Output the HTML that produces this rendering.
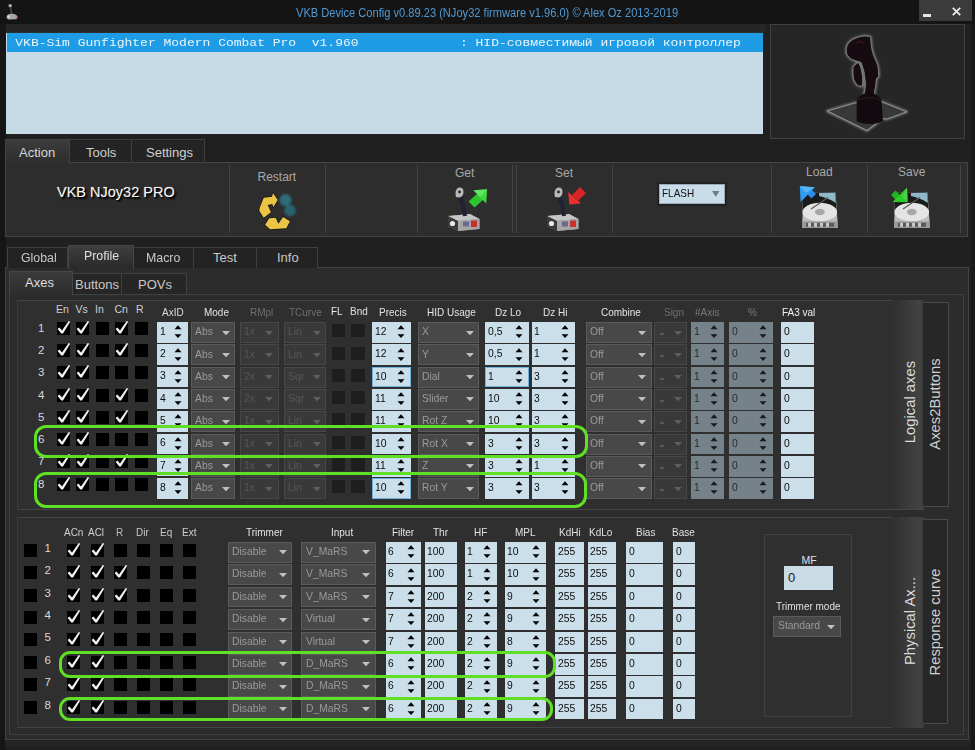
<!DOCTYPE html><html><head><meta charset="utf-8"><style>
html,body{margin:0;padding:0}
body{width:975px;height:750px;overflow:hidden;position:relative;background:#1d1d1d;font-family:"Liberation Sans",sans-serif}
div,svg{position:absolute}
.t{white-space:pre}
</style></head><body>
<div style="left:0px;top:0px;width:975px;height:24px;background:#141414"></div>
<div style="left:0px;top:24px;width:975px;height:726px;background:#202020"></div>
<div style="left:6px;top:24px;width:760px;height:8px;background:#262626"></div>
<div style="left:0px;top:24px;width:6px;height:726px;background:#161616"></div>
<div style="left:971px;top:24px;width:4px;height:726px;background:#181818"></div>
<div class="t" style="left:296px;top:6.64px;font-size:12px;line-height:12px;color:#4f98d2;font-family:'Liberation Sans',sans-serif;transform:scaleX(0.925);transform-origin:0 0">VKB Device Config v0.89.23 (NJoy32 firmware v1.96.0) © Alex Oz 2013-2019</div>
<div style="left:918.6px;top:0px;width:53.5px;height:20.8px;background:#3b3b3b"></div>
<div style="left:923.3px;top:14.3px;width:8px;height:2.3px;background:#e4e4e4"></div>
<svg style="position:absolute;left:952px;top:6.5px" width="9" height="9" viewBox="0 0 9 9"><path d="M0.8 0.8 L8.2 8.2 M8.2 0.8 L0.8 8.2" stroke="#e8e8e8" stroke-width="1.9"/></svg>
<svg style="position:absolute;left:0;top:0" width="30" height="25" viewBox="0 0 30 25"><defs><filter id="ib"><feGaussianBlur stdDeviation="0.7"/></filter></defs><g filter="url(#ib)"><circle cx="10.2" cy="5.8" r="1.7" fill="#b0b0b0"/><path d="M10.5 7.5 L11.5 13.5" stroke="#4a4a4a" stroke-width="1.6"/><path d="M6.5 17.5 C6.5 14.5 9 13.5 12 13.8 C15 14 17.5 15 17.5 17 L16.5 19.2 L8 19.5 Z" fill="#a8a8a8"/><circle cx="8.5" cy="16.8" r="1.2" fill="#e0e0e0"/><circle cx="16.5" cy="17" r="1" fill="#c08090"/></g></svg>
<div style="left:6px;top:32px;width:757px;height:101.3px;background:#c6dbe6;border-top:1px solid #2e2e2e"></div>
<div style="left:7px;top:33px;width:756px;height:18.5px;background:#1e9ce6"></div>
<div class="t" style="left:15.3px;top:35.74px;font-size:13px;line-height:13px;color:rgba(255,255,255,0.9);font-family:'Liberation Mono',monospace;transform:scaleY(0.88);transform-origin:0 10px">VKB-Sim Gunfighter Modern Combat Pro  v1.960             : HID-совместимый игровой контроллер</div>
<div style="left:770px;top:24px;width:195px;height:115px;background:#262626;border:1px solid #404040;box-sizing:border-box"></div>
<svg style="position:absolute;left:770px;top:24px" width="195" height="116" viewBox="770 24 195 116">
<defs><filter id="gl" x="-30%" y="-30%" width="160%" height="160%"><feGaussianBlur stdDeviation="1.1"/></filter></defs>
<g filter="url(#gl)" opacity="0.8" fill="none" stroke="#8a8a8a" stroke-width="2.6" stroke-linejoin="round">
<path d="M827.3 111 L855 103 L882 102 L906.7 111.7 L887 119 L883 118.5 L867 130.5 Z"/>
<path d="M864 36 C867 36 870 36.5 870.6 37 C871 40 871 43 871.3 45.6 C872 50 873 54 874.3 57.3 C876 61 877.5 64 877.9 66.1 C878.5 70 878.8 73 878.7 76.4 L876.5 78.6 C876 81 875.8 84 875.7 86.7 C875 89 874.6 91 874.3 95 L864 95 C865 90 865.5 86 865.5 83.7 C865 79 864.5 75 864 72 C863 68 862 65 861 62.5 L858.9 61.7 C856 61 853 60 850.8 58.8 C848.5 57 847 55 846.4 53 C846 50 846.5 47.5 847.1 45.6 C848.5 42.5 851 40.5 853.7 39 C857 37.5 860.5 36.2 864 36 Z"/>
<path d="M858.5 62.5 C856 63.8 854 65.5 853 67.6 C852.8 71.5 853 75.5 853.7 79.3 C854.5 81.5 856 83.5 857.4 85.2 C859 86 860.8 86.2 862.5 86 C862.8 83 862.7 79.5 862.5 76.4 C862 72.5 861.3 69 860.3 66.1 Z"/>
</g>
<path d="M827.3 111 L855 103 L882 102 L906.7 111.7 L887 119 L883 118.5 L867 130.5 Z" fill="#383838" stroke="#8c8c8c" stroke-width="1.1" stroke-linejoin="round"/>
<path d="M858.5 62.5 C856 63.8 854 65.5 853 67.6 C852.8 71.5 853 75.5 853.7 79.3 C854.5 81.5 856 83.5 857.4 85.2 C859 86 860.8 86.2 862.5 86 C862.8 83 862.7 79.5 862.5 76.4 C862 72.5 861.3 69 860.3 66.1 Z" fill="#160c10" stroke="#808080" stroke-width="0.9"/>
<path d="M864 36 C867 36 870 36.5 870.6 37 C871 40 871 43 871.3 45.6 C872 50 873 54 874.3 57.3 C876 61 877.5 64 877.9 66.1 C878.5 70 878.8 73 878.7 76.4 L876.5 78.6 C876 81 875.8 84 875.7 86.7 C875 89 874.6 91 874.3 95 L864 95 C865 90 865.5 86 865.5 83.7 C865 79 864.5 75 864 72 C863 68 862 65 861 62.5 L858.9 61.7 C856 61 853 60 850.8 58.8 C848.5 57 847 55 846.4 53 C846 50 846.5 47.5 847.1 45.6 C848.5 42.5 851 40.5 853.7 39 C857 37.5 860.5 36.2 864 36 Z" fill="#150b10" stroke="#858585" stroke-width="0.9"/>
<path d="M857 43 C859 41 862 41 864 43" stroke="#4a1a28" stroke-width="1.2" fill="none"/>
<path d="M856.7 102 C857 96 864 93 869 93 C874 93 881 96 881.6 102 L883 121 C878 125 862 125 856.7 121 Z" fill="#120a0e"/>
<path d="M858 100 C862 97 876 97 880 100" stroke="#2a2a2a" stroke-width="0.8" fill="none"/>
</svg>
<div style="left:5px;top:162px;width:963px;height:75px;background:#2d2d2d;border:1px solid #444;box-sizing:border-box"></div>
<div style="left:5px;top:139px;width:65px;height:24.5px;background:linear-gradient(#3c3c3c,#2d2d2d);border:1px solid #424242;border-bottom:none;box-sizing:border-box"></div>
<div style="left:70px;top:139px;width:62px;height:23px;background:#242424;border:1px solid #3f3f3f;border-bottom:none;border-left:none;box-sizing:border-box"></div>
<div style="left:132px;top:139px;width:73px;height:23px;background:#242424;border:1px solid #3f3f3f;border-bottom:none;border-left:none;box-sizing:border-box"></div>
<div class="t" style="left:19px;top:146.00px;font-size:13px;line-height:13px;color:#d6d6d6;font-family:'Liberation Sans',sans-serif;">Action</div>
<div class="t" style="left:86px;top:146.00px;font-size:13px;line-height:13px;color:#cfcfcf;font-family:'Liberation Sans',sans-serif;">Tools</div>
<div class="t" style="left:146px;top:146.00px;font-size:13px;line-height:13px;color:#cfcfcf;font-family:'Liberation Sans',sans-serif;">Settings</div>
<div style="left:228.5px;top:165px;width:1px;height:68px;background:#454545"></div>
<div style="left:325px;top:165px;width:1px;height:68px;background:#454545"></div>
<div style="left:416.5px;top:165px;width:1px;height:68px;background:#454545"></div>
<div style="left:512.3px;top:165px;width:1px;height:68px;background:#454545"></div>
<div style="left:515.5px;top:165px;width:1px;height:68px;background:#454545"></div>
<div style="left:611.5px;top:165px;width:1px;height:68px;background:#454545"></div>
<div style="left:771px;top:165px;width:1px;height:68px;background:#454545"></div>
<div style="left:867px;top:165px;width:1px;height:68px;background:#454545"></div>
<div style="left:960px;top:165px;width:1px;height:68px;background:#454545"></div>
<div class="t" style="left:57px;top:185.33px;font-size:14.5px;line-height:14.5px;color:#f4f4f4;font-family:'Liberation Sans',sans-serif;text-shadow:1px 1px 0 #000,2px 2px 2px #000,0 0 1px #ccc">VKB NJoy32 PRO</div>
<div class="t" style="left:257.5px;top:171.24px;font-size:12px;line-height:12px;color:#a8a8a8;font-family:'Liberation Sans',sans-serif;">Restart</div>
<div class="t" style="left:455px;top:167.34px;font-size:12px;line-height:12px;color:#a8a8a8;font-family:'Liberation Sans',sans-serif;">Get</div>
<div class="t" style="left:555px;top:167.34px;font-size:12px;line-height:12px;color:#a8a8a8;font-family:'Liberation Sans',sans-serif;">Set</div>
<div class="t" style="left:806px;top:166.34px;font-size:12px;line-height:12px;color:#a8a8a8;font-family:'Liberation Sans',sans-serif;">Load</div>
<div class="t" style="left:898px;top:166.34px;font-size:12px;line-height:12px;color:#a8a8a8;font-family:'Liberation Sans',sans-serif;">Save</div>
<div style="left:659.4px;top:184.1px;width:65.4px;height:20.1px;background:#c8dde8;border:1px solid #9ab;box-sizing:border-box;box-shadow:0 0 0 2px #222"></div>
<div class="t" style="left:661.5px;top:188.41px;font-size:10.5px;line-height:10.5px;color:#111;font-family:'Liberation Sans',sans-serif;transform:scaleX(0.95);transform-origin:0 0">FLASH</div>
<svg style="position:absolute;left:711.5px;top:191px" width="8" height="6" viewBox="0 0 8 6"><path d="M0 0 L7.5 0 L3.75 5.8 Z" fill="#6d7d87"/></svg>
<svg style="position:absolute;left:255px;top:188px" width="45" height="45" viewBox="255 188 45 45">
<defs><filter id="bl" x="-50%" y="-50%" width="200%" height="200%"><feGaussianBlur stdDeviation="1.3"/></filter></defs>
<g filter="url(#bl)"><circle cx="285.5" cy="200" r="6" fill="#2e6c78"/><circle cx="290" cy="210.5" r="5.8" fill="#2a6470"/></g>
<path d="M259.7 207.7 L263.7 197.7 L272 196.7 L273 193 L277.7 200 L273.3 207.3 L272.3 204 L267.7 205 L271 212.3 L263.7 217.7 L259.3 211 Z" fill="#ebc445" stroke="#141414" stroke-width="1.4" stroke-linejoin="round" paint-order="stroke"/>
<path d="M265 224.7 L269.3 218.3 L275.7 217.7 L278.3 223.7 L283 217 L290 221.3 L286.3 228.3 L270 229.3 Z" fill="#ebc445" stroke="#141414" stroke-width="1.4" stroke-linejoin="round" paint-order="stroke"/>
</svg>
<svg style="position:absolute;left:440px;top:180px" width="55" height="55" viewBox="440 180 55 55">
<path d="M448 216 L470 214 L479.5 219 L479.5 229 L458 231 L448 226 Z" fill="#8a8a8a"/>
<path d="M448 216 L470 214 L479.5 219 L458 221 Z" fill="#c4c4c4"/>
<path d="M458 221 L479.5 219 L479.5 229 L458 231 Z" fill="#a6a6a6"/>
<path d="M448 216 L458 221 L458 231 L448 226 Z" fill="#3a3a3a"/>
<circle cx="452.5" cy="223.5" r="2.6" fill="#e8e8e8"/>
<rect x="471" y="220.5" width="6" height="6.5" fill="#c8302e"/>
<rect x="463" y="221.5" width="6" height="5" fill="#6a6a8a"/>
<path d="M460.5 196 C462 202 464 209 465 216" stroke="#1e2232" stroke-width="4" fill="none"/>
<path d="M456 197 C455 193 455.5 189 458.5 187.8 C461.5 187 463.8 189 463.5 192.5 C463.2 195 462 197 460 197.5 Z" fill="#b8b8b8"/>
<circle cx="459.5" cy="192" r="1.4" fill="#2a2a2a"/>
<path d="M477.5 193.5 L483.5 199.5 L474.5 207.5 L468.5 201.5 Z" fill="#2fc42f"/><path d="M473.4 190.3 L487.2 189.3 L486.2 203.5 Z" fill="#3cd83c"/><path d="M473.4 190.3 L487.2 189.3 L480 197 Z" fill="#8af08a" opacity="0.5"/>
</svg>
<svg style="position:absolute;left:539px;top:179.5px" width="55" height="55" viewBox="440 180 55 55">
<path d="M448 216 L470 214 L479.5 219 L479.5 229 L458 231 L448 226 Z" fill="#8a8a8a"/>
<path d="M448 216 L470 214 L479.5 219 L458 221 Z" fill="#c4c4c4"/>
<path d="M458 221 L479.5 219 L479.5 229 L458 231 Z" fill="#a6a6a6"/>
<path d="M448 216 L458 221 L458 231 L448 226 Z" fill="#3a3a3a"/>
<circle cx="452.5" cy="223.5" r="2.6" fill="#e8e8e8"/>
<rect x="471" y="220.5" width="6" height="6.5" fill="#c8302e"/>
<rect x="463" y="221.5" width="6" height="5" fill="#6a6a8a"/>
<path d="M460.5 196 C462 202 464 209 465 216" stroke="#1e2232" stroke-width="4" fill="none"/>
<path d="M456 197 C455 193 455.5 189 458.5 187.8 C461.5 187 463.8 189 463.5 192.5 C463.2 195 462 197 460 197.5 Z" fill="#b8b8b8"/>
<circle cx="459.5" cy="192" r="1.4" fill="#2a2a2a"/>
<path d="M473 195 L479 201 L487 193 L481 187 Z" fill="#d82424"/><path d="M470.3 204.6 L469.2 192.1 L482 203.5 Z" fill="#e83030"/>
</svg>
<svg style="position:absolute;left:790px;top:180px" width="55" height="55" viewBox="790 180 55 55">
<path d="M803.2 192.5 L835.5 192.1 L837.5 221 L837.7 228 L802.1 228 L802.3 221 Z" fill="#bdbdbd"/>
<path d="M803.2 192.5 L835.5 192.1 L836.5 212 L802.8 212 Z" fill="#1a1a1a"/>
<path d="M819 193 L835.3 192.6 L835.8 203 C830 199 824 197 819 196 Z" fill="#8fb8c8"/>
<ellipse cx="819.8" cy="212" rx="17.3" ry="9.3" fill="#e4e4e4"/>
<ellipse cx="819.8" cy="212" rx="5" ry="3.2" fill="#a8a8a8"/>
<path d="M811 209 L828 197.5" stroke="#5a5a5a" stroke-width="1.3"/>
<rect x="802.1" y="221.5" width="35.6" height="6.5" fill="#9a9a9a"/>
<rect x="806" y="222.8" width="28" height="4" fill="#5a5a5a"/>
<rect x="808" y="222.8" width="3" height="4" fill="#c8c8c8"/><rect x="814" y="222.8" width="3" height="4" fill="#c8c8c8"/><rect x="820" y="222.8" width="3" height="4" fill="#c8c8c8"/><rect x="826" y="222.8" width="3" height="4" fill="#c8c8c8"/>
<path d="M804.5 191.5 L809 187 L816 194 L811.5 198.5 Z" fill="#2a8ee6"/><path d="M799.8 186 L815 187.2 L800.6 202 Z" fill="#2f9cf0"/><path d="M799.8 186 L815 187.2 L806 193 Z" fill="#80c8ff" opacity="0.5"/>
</svg>
<svg style="position:absolute;left:882px;top:180px" width="55" height="55" viewBox="790 180 55 55">
<path d="M803.2 192.5 L835.5 192.1 L837.5 221 L837.7 228 L802.1 228 L802.3 221 Z" fill="#bdbdbd"/>
<path d="M803.2 192.5 L835.5 192.1 L836.5 212 L802.8 212 Z" fill="#1a1a1a"/>
<path d="M819 193 L835.3 192.6 L835.8 203 C830 199 824 197 819 196 Z" fill="#8fb8c8"/>
<ellipse cx="819.8" cy="212" rx="17.3" ry="9.3" fill="#e4e4e4"/>
<ellipse cx="819.8" cy="212" rx="5" ry="3.2" fill="#a8a8a8"/>
<path d="M811 209 L828 197.5" stroke="#5a5a5a" stroke-width="1.3"/>
<rect x="802.1" y="221.5" width="35.6" height="6.5" fill="#9a9a9a"/>
<rect x="806" y="222.8" width="28" height="4" fill="#5a5a5a"/>
<rect x="808" y="222.8" width="3" height="4" fill="#c8c8c8"/><rect x="814" y="222.8" width="3" height="4" fill="#c8c8c8"/><rect x="820" y="222.8" width="3" height="4" fill="#c8c8c8"/><rect x="826" y="222.8" width="3" height="4" fill="#c8c8c8"/>
<path d="M811 198 L806.5 202.5 L799 195 L803.5 190.5 Z" fill="#22b422"/><path d="M815.7 202.2 L815 187.5 L800.5 202 Z" fill="#2ccc2c"/><path d="M815 187.5 L810 196 L815.7 202.2 Z" fill="#60e060" opacity="0.5"/>
</svg>
<div style="left:5px;top:267px;width:964px;height:473px;background:#2c2c2c;border:1px solid #424242;box-sizing:border-box"></div>
<div style="left:7px;top:247px;width:61px;height:21px;background:#232323;border:1px solid #404040;border-bottom:none;box-sizing:border-box"></div>
<div class="t" style="left:20.5px;top:251.00px;font-size:13px;line-height:13px;color:#c8c8c8;font-family:'Liberation Sans',sans-serif;transform:scaleX(0.95);transform-origin:0 0">Global</div>
<div style="left:68px;top:245px;width:65.5px;height:24px;background:linear-gradient(#3e3e3e,#2a2a2a);border:1px solid #464646;border-bottom:none;box-sizing:border-box"></div>
<div class="t" style="left:83.5px;top:248.70px;font-size:13px;line-height:13px;color:#e0e0e0;font-family:'Liberation Sans',sans-serif;transform:scaleX(0.95);transform-origin:0 0">Profile</div>
<div style="left:133.5px;top:247px;width:60.5px;height:21px;background:#232323;border:1px solid #404040;border-bottom:none;box-sizing:border-box;border-left:none"></div>
<div class="t" style="left:146px;top:251.00px;font-size:13px;line-height:13px;color:#c8c8c8;font-family:'Liberation Sans',sans-serif;transform:scaleX(0.95);transform-origin:0 0">Macro</div>
<div style="left:194px;top:247px;width:63px;height:21px;background:#232323;border:1px solid #404040;border-bottom:none;box-sizing:border-box;border-left:none"></div>
<div class="t" style="left:213px;top:251.00px;font-size:13px;line-height:13px;color:#c8c8c8;font-family:'Liberation Sans',sans-serif;">Test</div>
<div style="left:257px;top:247px;width:61px;height:21px;background:#232323;border:1px solid #404040;border-bottom:none;box-sizing:border-box;border-left:none"></div>
<div class="t" style="left:277px;top:251.00px;font-size:13px;line-height:13px;color:#c8c8c8;font-family:'Liberation Sans',sans-serif;">Info</div>
<div style="left:9px;top:293.5px;width:955px;height:441.5px;background:#2c2c2c;border:1px solid #404040;box-sizing:border-box"></div>
<div style="left:9px;top:271px;width:63.5px;height:24px;background:linear-gradient(#3a3a3a,#2d2d2d);border:1px solid #474747;border-bottom:none;box-sizing:border-box"></div>
<div class="t" style="left:25px;top:276.00px;font-size:13px;line-height:13px;color:#dedede;font-family:'Liberation Sans',sans-serif;">Axes</div>
<div style="left:72.5px;top:273px;width:49.5px;height:21px;background:#262626;border:1px solid #404040;border-bottom:none;border-left:none;box-sizing:border-box"></div>
<div class="t" style="left:75px;top:278.00px;font-size:13px;line-height:13px;color:#c8c8c8;font-family:'Liberation Sans',sans-serif;">Buttons</div>
<div style="left:122px;top:273px;width:65px;height:21px;background:#262626;border:1px solid #404040;border-bottom:none;border-left:none;box-sizing:border-box"></div>
<div class="t" style="left:138px;top:278.00px;font-size:13px;line-height:13px;color:#c8c8c8;font-family:'Liberation Sans',sans-serif;">POVs</div>
<div style="left:17px;top:299.5px;width:907px;height:210px;background:#2f2f2f;border-top:1px solid #454545;border-left:1px solid #3a3a3a;border-bottom:1px solid #454545;box-sizing:border-box"></div>
<div style="left:891.5px;top:299.5px;width:32px;height:209px;background:linear-gradient(90deg,#2f2f2f,#434343 88%,#3a3a3a);"></div>
<div style="left:923.3px;top:301.5px;width:25.5px;height:205px;background:#272727;border:1px solid #4a4a4a;border-left:none;box-sizing:border-box"></div>
<div class="t" style="left:910px;top:402px;width:0;height:0"><div style="position:absolute;left:-60px;top:-8px;width:120px;text-align:center;font-size:14.8px;line-height:16px;color:#dcdcdc;transform:rotate(-90deg)">Logical axes</div></div>
<div class="t" style="left:935px;top:404.2px;width:0;height:0"><div style="position:absolute;left:-60px;top:-8px;width:120px;text-align:center;font-size:14.8px;line-height:16px;color:#d0d0d0;transform:rotate(-90deg)">Axes2Buttons</div></div>
<div class="t" style="left:56px;top:303.81px;font-size:10.5px;line-height:10.5px;color:#cfcfcf;font-family:'Liberation Sans',sans-serif;">En</div>
<div class="t" style="left:75.5px;top:303.81px;font-size:10.5px;line-height:10.5px;color:#cfcfcf;font-family:'Liberation Sans',sans-serif;">Vs</div>
<div class="t" style="left:95px;top:303.81px;font-size:10.5px;line-height:10.5px;color:#cfcfcf;font-family:'Liberation Sans',sans-serif;">In</div>
<div class="t" style="left:114.5px;top:303.81px;font-size:10.5px;line-height:10.5px;color:#cfcfcf;font-family:'Liberation Sans',sans-serif;">Cn</div>
<div class="t" style="left:136px;top:303.81px;font-size:10.5px;line-height:10.5px;color:#cfcfcf;font-family:'Liberation Sans',sans-serif;">R</div>
<div class="t" style="left:162px;top:307.11px;font-size:10.5px;line-height:10.5px;color:#dcdcdc;font-family:'Liberation Sans',sans-serif;transform:scaleX(0.95);transform-origin:0 0">AxID</div>
<div class="t" style="left:203.6px;top:307.11px;font-size:10.5px;line-height:10.5px;color:#e4e4e4;font-family:'Liberation Sans',sans-serif;transform:scaleX(0.95);transform-origin:0 0">Mode</div>
<div class="t" style="left:249.8px;top:307.11px;font-size:10.5px;line-height:10.5px;color:#6e6e6e;font-family:'Liberation Sans',sans-serif;transform:scaleX(0.95);transform-origin:0 0">RMpl</div>
<div class="t" style="left:288.7px;top:307.11px;font-size:10.5px;line-height:10.5px;color:#6e6e6e;font-family:'Liberation Sans',sans-serif;transform:scaleX(0.95);transform-origin:0 0">TCurve</div>
<div class="t" style="left:330.7px;top:305.61px;font-size:10.5px;line-height:10.5px;color:#e8e8e8;font-family:'Liberation Sans',sans-serif;transform:scaleX(0.95);transform-origin:0 0">FL</div>
<div class="t" style="left:350.4px;top:305.61px;font-size:10.5px;line-height:10.5px;color:#e0e0e0;font-family:'Liberation Sans',sans-serif;transform:scaleX(0.95);transform-origin:0 0">Bnd</div>
<div class="t" style="left:378.5px;top:307.11px;font-size:10.5px;line-height:10.5px;color:#e4e4e4;font-family:'Liberation Sans',sans-serif;transform:scaleX(0.95);transform-origin:0 0">Precis</div>
<div class="t" style="left:427px;top:307.11px;font-size:10.5px;line-height:10.5px;color:#e4e4e4;font-family:'Liberation Sans',sans-serif;transform:scaleX(0.95);transform-origin:0 0">HID Usage</div>
<div class="t" style="left:494.8px;top:307.11px;font-size:10.5px;line-height:10.5px;color:#e4e4e4;font-family:'Liberation Sans',sans-serif;transform:scaleX(0.95);transform-origin:0 0">Dz Lo</div>
<div class="t" style="left:542.6px;top:307.11px;font-size:10.5px;line-height:10.5px;color:#e4e4e4;font-family:'Liberation Sans',sans-serif;transform:scaleX(0.95);transform-origin:0 0">Dz Hi</div>
<div class="t" style="left:601px;top:307.11px;font-size:10.5px;line-height:10.5px;color:#e4e4e4;font-family:'Liberation Sans',sans-serif;transform:scaleX(0.95);transform-origin:0 0">Combine</div>
<div class="t" style="left:664px;top:307.11px;font-size:10.5px;line-height:10.5px;color:#6e6e6e;font-family:'Liberation Sans',sans-serif;transform:scaleX(0.95);transform-origin:0 0">Sign</div>
<div class="t" style="left:695px;top:307.11px;font-size:10.5px;line-height:10.5px;color:#7a7a7a;font-family:'Liberation Sans',sans-serif;transform:scaleX(0.95);transform-origin:0 0">#Axis</div>
<div class="t" style="left:747.7px;top:307.11px;font-size:10.5px;line-height:10.5px;color:#7a7a7a;font-family:'Liberation Sans',sans-serif;transform:scaleX(0.95);transform-origin:0 0">%</div>
<div class="t" style="left:781.5px;top:307.11px;font-size:10.5px;line-height:10.5px;color:#f0f0f0;font-family:'Liberation Sans',sans-serif;transform:scaleX(0.95);transform-origin:0 0">FA3 val</div>
<div class="t" style="left:38px;top:322.67px;font-size:11.5px;line-height:11.5px;color:#d8d8d8;font-family:'Liberation Sans',sans-serif;">1</div>
<div style="left:56.5px;top:321.6px;width:13px;height:13px;background:#000"><svg width="15" height="15" viewBox="0 -2 15 15" style="position:absolute;left:0;top:-2px;overflow:visible"><path d="M0.6 7.1 L2.4 5.5 L5.0 8.5 L11.7 -1.1 L13.2 -0.3 L6.0 11.5 L4.3 11.5 Z" fill="#f2f2f2"/></svg></div>
<div style="left:76px;top:321.6px;width:13px;height:13px;background:#000"><svg width="15" height="15" viewBox="0 -2 15 15" style="position:absolute;left:0;top:-2px;overflow:visible"><path d="M0.6 7.1 L2.4 5.5 L5.0 8.5 L11.7 -1.1 L13.2 -0.3 L6.0 11.5 L4.3 11.5 Z" fill="#f2f2f2"/></svg></div>
<div style="left:95.5px;top:321.6px;width:13px;height:13px;background:#000"></div>
<div style="left:115px;top:321.6px;width:13px;height:13px;background:#000"><svg width="15" height="15" viewBox="0 -2 15 15" style="position:absolute;left:0;top:-2px;overflow:visible"><path d="M0.6 7.1 L2.4 5.5 L5.0 8.5 L11.7 -1.1 L13.2 -0.3 L6.0 11.5 L4.3 11.5 Z" fill="#f2f2f2"/></svg></div>
<div style="left:134.5px;top:321.6px;width:13px;height:13px;background:#000"></div>
<div style="left:157px;top:322.0px;width:31px;height:20.5px;background:#cadfe9;"></div>
<div class="t" style="left:159.5px;top:325.89px;font-size:11.5px;line-height:11.5px;color:#0d0d0d;font-family:'Liberation Sans',sans-serif;transform:scaleX(0.9);transform-origin:0 0">1</div>
<svg style="position:absolute;left:174px;top:325.2px" width="8" height="14" viewBox="0 0 8 14"><path d="M0.5 4.2 L4 0.3 L7.5 4.2 Z M0.5 9.2 L4 13.1 L7.5 9.2 Z" fill="#000"/></svg>
<div style="left:190.5px;top:322.0px;width:44.5px;height:21px;background:#484848;border:1px solid #5b5b5b;box-sizing:border-box;"></div>
<div class="t" style="left:194.8px;top:326.21px;font-size:11.5px;line-height:11.5px;color:#9a9a9a;font-family:'Liberation Sans',sans-serif;transform:scaleX(0.9);transform-origin:0 0">Abs</div>
<svg style="position:absolute;left:221.5px;top:330.5px" width="8" height="5" viewBox="0 0 8 5"><path d="M0 0 L8 0 L4 4.3 Z" fill="#c0c0c0"/></svg>
<div style="left:240px;top:322.0px;width:38.6px;height:21px;background:#393939;border:1px solid #474747;box-sizing:border-box;"></div>
<div class="t" style="left:244.3px;top:326.21px;font-size:11.5px;line-height:11.5px;color:#575757;font-family:'Liberation Sans',sans-serif;transform:scaleX(0.9);transform-origin:0 0">1x</div>
<svg style="position:absolute;left:265.1px;top:330.5px" width="8" height="5" viewBox="0 0 8 5"><path d="M0 0 L8 0 L4 4.3 Z" fill="#5e5e5e"/></svg>
<div style="left:284px;top:322.0px;width:42.3px;height:21px;background:#393939;border:1px solid #474747;box-sizing:border-box;"></div>
<div class="t" style="left:288.3px;top:326.21px;font-size:11.5px;line-height:11.5px;color:#575757;font-family:'Liberation Sans',sans-serif;transform:scaleX(0.9);transform-origin:0 0">Lin</div>
<svg style="position:absolute;left:312.8px;top:330.5px" width="8" height="5" viewBox="0 0 8 5"><path d="M0 0 L8 0 L4 4.3 Z" fill="#5e5e5e"/></svg>
<div style="left:331.5px;top:324.2px;width:13.5px;height:13px;background:#1e1e1e"></div>
<div style="left:351px;top:324.2px;width:13.5px;height:13px;background:#1e1e1e"></div>
<div style="left:372.3px;top:322.0px;width:38.4px;height:20.8px;background:#cadfe9;"></div>
<div class="t" style="left:374.8px;top:326.08px;font-size:11.5px;line-height:11.5px;color:#0d0d0d;font-family:'Liberation Sans',sans-serif;transform:scaleX(0.9);transform-origin:0 0">12</div>
<svg style="position:absolute;left:396.7px;top:325.2px" width="8" height="14" viewBox="0 0 8 14"><path d="M0.5 4.2 L4 0.3 L7.5 4.2 Z M0.5 9.2 L4 13.1 L7.5 9.2 Z" fill="#000"/></svg>
<div style="left:418px;top:322.0px;width:61px;height:21px;background:#484848;border:1px solid #5b5b5b;box-sizing:border-box;"></div>
<div class="t" style="left:422.3px;top:326.21px;font-size:11.5px;line-height:11.5px;color:#9a9a9a;font-family:'Liberation Sans',sans-serif;transform:scaleX(0.9);transform-origin:0 0">X</div>
<svg style="position:absolute;left:465.5px;top:330.5px" width="8" height="5" viewBox="0 0 8 5"><path d="M0 0 L8 0 L4 4.3 Z" fill="#c0c0c0"/></svg>
<div style="left:485px;top:322.0px;width:43.8px;height:20.8px;background:#cadfe9;"></div>
<div class="t" style="left:487.5px;top:326.08px;font-size:11.5px;line-height:11.5px;color:#0d0d0d;font-family:'Liberation Sans',sans-serif;transform:scaleX(0.9);transform-origin:0 0">0,5</div>
<svg style="position:absolute;left:514.8px;top:325.2px" width="8" height="14" viewBox="0 0 8 14"><path d="M0.5 4.2 L4 0.3 L7.5 4.2 Z M0.5 9.2 L4 13.1 L7.5 9.2 Z" fill="#000"/></svg>
<div style="left:531.7px;top:322.0px;width:43.7px;height:20.8px;background:#cadfe9;"></div>
<div class="t" style="left:534.2px;top:326.08px;font-size:11.5px;line-height:11.5px;color:#0d0d0d;font-family:'Liberation Sans',sans-serif;transform:scaleX(0.9);transform-origin:0 0">1</div>
<svg style="position:absolute;left:561.4000000000001px;top:325.2px" width="8" height="14" viewBox="0 0 8 14"><path d="M0.5 4.2 L4 0.3 L7.5 4.2 Z M0.5 9.2 L4 13.1 L7.5 9.2 Z" fill="#000"/></svg>
<div style="left:585.5px;top:322.0px;width:66px;height:21px;background:#484848;border:1px solid #5b5b5b;box-sizing:border-box;"></div>
<div class="t" style="left:589.8px;top:326.21px;font-size:11.5px;line-height:11.5px;color:#9a9a9a;font-family:'Liberation Sans',sans-serif;transform:scaleX(0.9);transform-origin:0 0">Off</div>
<svg style="position:absolute;left:638.0px;top:330.5px" width="8" height="5" viewBox="0 0 8 5"><path d="M0 0 L8 0 L4 4.3 Z" fill="#c0c0c0"/></svg>
<div style="left:654px;top:322.0px;width:33.2px;height:21px;background:#393939;border:1px solid #474747;box-sizing:border-box;"></div>
<div style="left:659.7px;top:333.0px;width:4.3px;height:2px;background:#575757"></div>
<svg style="position:absolute;left:673.7px;top:330.5px" width="8" height="5" viewBox="0 0 8 5"><path d="M0 0 L8 0 L4 4.3 Z" fill="#5e5e5e"/></svg>
<div style="left:691.3px;top:322.0px;width:32.8px;height:20.8px;background:#76828a;"></div>
<div class="t" style="left:693.8px;top:326.08px;font-size:11.5px;line-height:11.5px;color:#2a2a2a;font-family:'Liberation Sans',sans-serif;transform:scaleX(0.9);transform-origin:0 0">1</div>
<svg style="position:absolute;left:710.0999999999999px;top:325.2px" width="8" height="14" viewBox="0 0 8 14"><path d="M0.5 4.2 L4 0.3 L7.5 4.2 Z M0.5 9.2 L4 13.1 L7.5 9.2 Z" fill="#1a1a1a"/></svg>
<div style="left:729.2px;top:322.0px;width:44.1px;height:20.8px;background:#76828a;"></div>
<div class="t" style="left:731.7px;top:326.08px;font-size:11.5px;line-height:11.5px;color:#2a2a2a;font-family:'Liberation Sans',sans-serif;transform:scaleX(0.9);transform-origin:0 0">0</div>
<svg style="position:absolute;left:759.3000000000001px;top:325.2px" width="8" height="14" viewBox="0 0 8 14"><path d="M0.5 4.2 L4 0.3 L7.5 4.2 Z M0.5 9.2 L4 13.1 L7.5 9.2 Z" fill="#1a1a1a"/></svg>
<div style="left:781.1px;top:322.0px;width:33.3px;height:20.8px;background:#cadfe9;"></div>
<div class="t" style="left:783.6px;top:326.08px;font-size:11.5px;line-height:11.5px;color:#0d0d0d;font-family:'Liberation Sans',sans-serif;transform:scaleX(0.9);transform-origin:0 0">0</div>
<div class="t" style="left:38px;top:344.97px;font-size:11.5px;line-height:11.5px;color:#d8d8d8;font-family:'Liberation Sans',sans-serif;">2</div>
<div style="left:56.5px;top:343.90000000000003px;width:13px;height:13px;background:#000"><svg width="15" height="15" viewBox="0 -2 15 15" style="position:absolute;left:0;top:-2px;overflow:visible"><path d="M0.6 7.1 L2.4 5.5 L5.0 8.5 L11.7 -1.1 L13.2 -0.3 L6.0 11.5 L4.3 11.5 Z" fill="#f2f2f2"/></svg></div>
<div style="left:76px;top:343.90000000000003px;width:13px;height:13px;background:#000"><svg width="15" height="15" viewBox="0 -2 15 15" style="position:absolute;left:0;top:-2px;overflow:visible"><path d="M0.6 7.1 L2.4 5.5 L5.0 8.5 L11.7 -1.1 L13.2 -0.3 L6.0 11.5 L4.3 11.5 Z" fill="#f2f2f2"/></svg></div>
<div style="left:95.5px;top:343.90000000000003px;width:13px;height:13px;background:#000"></div>
<div style="left:115px;top:343.90000000000003px;width:13px;height:13px;background:#000"><svg width="15" height="15" viewBox="0 -2 15 15" style="position:absolute;left:0;top:-2px;overflow:visible"><path d="M0.6 7.1 L2.4 5.5 L5.0 8.5 L11.7 -1.1 L13.2 -0.3 L6.0 11.5 L4.3 11.5 Z" fill="#f2f2f2"/></svg></div>
<div style="left:134.5px;top:343.90000000000003px;width:13px;height:13px;background:#000"></div>
<div style="left:157px;top:344.3px;width:31px;height:20.5px;background:#cadfe9;"></div>
<div class="t" style="left:159.5px;top:348.19px;font-size:11.5px;line-height:11.5px;color:#0d0d0d;font-family:'Liberation Sans',sans-serif;transform:scaleX(0.9);transform-origin:0 0">2</div>
<svg style="position:absolute;left:174px;top:347.5px" width="8" height="14" viewBox="0 0 8 14"><path d="M0.5 4.2 L4 0.3 L7.5 4.2 Z M0.5 9.2 L4 13.1 L7.5 9.2 Z" fill="#000"/></svg>
<div style="left:190.5px;top:344.3px;width:44.5px;height:21px;background:#484848;border:1px solid #5b5b5b;box-sizing:border-box;"></div>
<div class="t" style="left:194.8px;top:348.51px;font-size:11.5px;line-height:11.5px;color:#9a9a9a;font-family:'Liberation Sans',sans-serif;transform:scaleX(0.9);transform-origin:0 0">Abs</div>
<svg style="position:absolute;left:221.5px;top:352.8px" width="8" height="5" viewBox="0 0 8 5"><path d="M0 0 L8 0 L4 4.3 Z" fill="#c0c0c0"/></svg>
<div style="left:240px;top:344.3px;width:38.6px;height:21px;background:#393939;border:1px solid #474747;box-sizing:border-box;"></div>
<div class="t" style="left:244.3px;top:348.51px;font-size:11.5px;line-height:11.5px;color:#575757;font-family:'Liberation Sans',sans-serif;transform:scaleX(0.9);transform-origin:0 0">1x</div>
<svg style="position:absolute;left:265.1px;top:352.8px" width="8" height="5" viewBox="0 0 8 5"><path d="M0 0 L8 0 L4 4.3 Z" fill="#5e5e5e"/></svg>
<div style="left:284px;top:344.3px;width:42.3px;height:21px;background:#393939;border:1px solid #474747;box-sizing:border-box;"></div>
<div class="t" style="left:288.3px;top:348.51px;font-size:11.5px;line-height:11.5px;color:#575757;font-family:'Liberation Sans',sans-serif;transform:scaleX(0.9);transform-origin:0 0">Lin</div>
<svg style="position:absolute;left:312.8px;top:352.8px" width="8" height="5" viewBox="0 0 8 5"><path d="M0 0 L8 0 L4 4.3 Z" fill="#5e5e5e"/></svg>
<div style="left:331.5px;top:346.5px;width:13.5px;height:13px;background:#1e1e1e"></div>
<div style="left:351px;top:346.5px;width:13.5px;height:13px;background:#1e1e1e"></div>
<div style="left:372.3px;top:344.3px;width:38.4px;height:20.8px;background:#cadfe9;"></div>
<div class="t" style="left:374.8px;top:348.38px;font-size:11.5px;line-height:11.5px;color:#0d0d0d;font-family:'Liberation Sans',sans-serif;transform:scaleX(0.9);transform-origin:0 0">12</div>
<svg style="position:absolute;left:396.7px;top:347.5px" width="8" height="14" viewBox="0 0 8 14"><path d="M0.5 4.2 L4 0.3 L7.5 4.2 Z M0.5 9.2 L4 13.1 L7.5 9.2 Z" fill="#000"/></svg>
<div style="left:418px;top:344.3px;width:61px;height:21px;background:#484848;border:1px solid #5b5b5b;box-sizing:border-box;"></div>
<div class="t" style="left:422.3px;top:348.51px;font-size:11.5px;line-height:11.5px;color:#9a9a9a;font-family:'Liberation Sans',sans-serif;transform:scaleX(0.9);transform-origin:0 0">Y</div>
<svg style="position:absolute;left:465.5px;top:352.8px" width="8" height="5" viewBox="0 0 8 5"><path d="M0 0 L8 0 L4 4.3 Z" fill="#c0c0c0"/></svg>
<div style="left:485px;top:344.3px;width:43.8px;height:20.8px;background:#cadfe9;"></div>
<div class="t" style="left:487.5px;top:348.38px;font-size:11.5px;line-height:11.5px;color:#0d0d0d;font-family:'Liberation Sans',sans-serif;transform:scaleX(0.9);transform-origin:0 0">0,5</div>
<svg style="position:absolute;left:514.8px;top:347.5px" width="8" height="14" viewBox="0 0 8 14"><path d="M0.5 4.2 L4 0.3 L7.5 4.2 Z M0.5 9.2 L4 13.1 L7.5 9.2 Z" fill="#000"/></svg>
<div style="left:531.7px;top:344.3px;width:43.7px;height:20.8px;background:#cadfe9;"></div>
<div class="t" style="left:534.2px;top:348.38px;font-size:11.5px;line-height:11.5px;color:#0d0d0d;font-family:'Liberation Sans',sans-serif;transform:scaleX(0.9);transform-origin:0 0">1</div>
<svg style="position:absolute;left:561.4000000000001px;top:347.5px" width="8" height="14" viewBox="0 0 8 14"><path d="M0.5 4.2 L4 0.3 L7.5 4.2 Z M0.5 9.2 L4 13.1 L7.5 9.2 Z" fill="#000"/></svg>
<div style="left:585.5px;top:344.3px;width:66px;height:21px;background:#484848;border:1px solid #5b5b5b;box-sizing:border-box;"></div>
<div class="t" style="left:589.8px;top:348.51px;font-size:11.5px;line-height:11.5px;color:#9a9a9a;font-family:'Liberation Sans',sans-serif;transform:scaleX(0.9);transform-origin:0 0">Off</div>
<svg style="position:absolute;left:638.0px;top:352.8px" width="8" height="5" viewBox="0 0 8 5"><path d="M0 0 L8 0 L4 4.3 Z" fill="#c0c0c0"/></svg>
<div style="left:654px;top:344.3px;width:33.2px;height:21px;background:#393939;border:1px solid #474747;box-sizing:border-box;"></div>
<div style="left:659.7px;top:355.3px;width:4.3px;height:2px;background:#575757"></div>
<svg style="position:absolute;left:673.7px;top:352.8px" width="8" height="5" viewBox="0 0 8 5"><path d="M0 0 L8 0 L4 4.3 Z" fill="#5e5e5e"/></svg>
<div style="left:691.3px;top:344.3px;width:32.8px;height:20.8px;background:#76828a;"></div>
<div class="t" style="left:693.8px;top:348.38px;font-size:11.5px;line-height:11.5px;color:#2a2a2a;font-family:'Liberation Sans',sans-serif;transform:scaleX(0.9);transform-origin:0 0">1</div>
<svg style="position:absolute;left:710.0999999999999px;top:347.5px" width="8" height="14" viewBox="0 0 8 14"><path d="M0.5 4.2 L4 0.3 L7.5 4.2 Z M0.5 9.2 L4 13.1 L7.5 9.2 Z" fill="#1a1a1a"/></svg>
<div style="left:729.2px;top:344.3px;width:44.1px;height:20.8px;background:#76828a;"></div>
<div class="t" style="left:731.7px;top:348.38px;font-size:11.5px;line-height:11.5px;color:#2a2a2a;font-family:'Liberation Sans',sans-serif;transform:scaleX(0.9);transform-origin:0 0">0</div>
<svg style="position:absolute;left:759.3000000000001px;top:347.5px" width="8" height="14" viewBox="0 0 8 14"><path d="M0.5 4.2 L4 0.3 L7.5 4.2 Z M0.5 9.2 L4 13.1 L7.5 9.2 Z" fill="#1a1a1a"/></svg>
<div style="left:781.1px;top:344.3px;width:33.3px;height:20.8px;background:#cadfe9;"></div>
<div class="t" style="left:783.6px;top:348.38px;font-size:11.5px;line-height:11.5px;color:#0d0d0d;font-family:'Liberation Sans',sans-serif;transform:scaleX(0.9);transform-origin:0 0">0</div>
<div class="t" style="left:38px;top:367.27px;font-size:11.5px;line-height:11.5px;color:#d8d8d8;font-family:'Liberation Sans',sans-serif;">3</div>
<div style="left:56.5px;top:366.20000000000005px;width:13px;height:13px;background:#000"><svg width="15" height="15" viewBox="0 -2 15 15" style="position:absolute;left:0;top:-2px;overflow:visible"><path d="M0.6 7.1 L2.4 5.5 L5.0 8.5 L11.7 -1.1 L13.2 -0.3 L6.0 11.5 L4.3 11.5 Z" fill="#f2f2f2"/></svg></div>
<div style="left:76px;top:366.20000000000005px;width:13px;height:13px;background:#000"><svg width="15" height="15" viewBox="0 -2 15 15" style="position:absolute;left:0;top:-2px;overflow:visible"><path d="M0.6 7.1 L2.4 5.5 L5.0 8.5 L11.7 -1.1 L13.2 -0.3 L6.0 11.5 L4.3 11.5 Z" fill="#f2f2f2"/></svg></div>
<div style="left:95.5px;top:366.20000000000005px;width:13px;height:13px;background:#000"></div>
<div style="left:115px;top:366.20000000000005px;width:13px;height:13px;background:#000"></div>
<div style="left:134.5px;top:366.20000000000005px;width:13px;height:13px;background:#000"></div>
<div style="left:157px;top:366.6px;width:31px;height:20.5px;background:#cadfe9;"></div>
<div class="t" style="left:159.5px;top:370.49px;font-size:11.5px;line-height:11.5px;color:#0d0d0d;font-family:'Liberation Sans',sans-serif;transform:scaleX(0.9);transform-origin:0 0">3</div>
<svg style="position:absolute;left:174px;top:369.8px" width="8" height="14" viewBox="0 0 8 14"><path d="M0.5 4.2 L4 0.3 L7.5 4.2 Z M0.5 9.2 L4 13.1 L7.5 9.2 Z" fill="#000"/></svg>
<div style="left:190.5px;top:366.6px;width:44.5px;height:21px;background:#484848;border:1px solid #5b5b5b;box-sizing:border-box;"></div>
<div class="t" style="left:194.8px;top:370.81px;font-size:11.5px;line-height:11.5px;color:#9a9a9a;font-family:'Liberation Sans',sans-serif;transform:scaleX(0.9);transform-origin:0 0">Abs</div>
<svg style="position:absolute;left:221.5px;top:375.1px" width="8" height="5" viewBox="0 0 8 5"><path d="M0 0 L8 0 L4 4.3 Z" fill="#c0c0c0"/></svg>
<div style="left:240px;top:366.6px;width:38.6px;height:21px;background:#393939;border:1px solid #474747;box-sizing:border-box;"></div>
<div class="t" style="left:244.3px;top:370.81px;font-size:11.5px;line-height:11.5px;color:#575757;font-family:'Liberation Sans',sans-serif;transform:scaleX(0.9);transform-origin:0 0">2x</div>
<svg style="position:absolute;left:265.1px;top:375.1px" width="8" height="5" viewBox="0 0 8 5"><path d="M0 0 L8 0 L4 4.3 Z" fill="#5e5e5e"/></svg>
<div style="left:284px;top:366.6px;width:42.3px;height:21px;background:#393939;border:1px solid #474747;box-sizing:border-box;"></div>
<div class="t" style="left:288.3px;top:370.81px;font-size:11.5px;line-height:11.5px;color:#575757;font-family:'Liberation Sans',sans-serif;transform:scaleX(0.9);transform-origin:0 0">Sqr</div>
<svg style="position:absolute;left:312.8px;top:375.1px" width="8" height="5" viewBox="0 0 8 5"><path d="M0 0 L8 0 L4 4.3 Z" fill="#5e5e5e"/></svg>
<div style="left:331.5px;top:368.8px;width:13.5px;height:13px;background:#1e1e1e"></div>
<div style="left:351px;top:368.8px;width:13.5px;height:13px;background:#1e1e1e"></div>
<div style="left:372.3px;top:366.6px;width:38.4px;height:20.8px;background:#cadfe9;border:1px solid #6fb2e0;box-sizing:border-box;"></div>
<div class="t" style="left:374.8px;top:370.68px;font-size:11.5px;line-height:11.5px;color:#0d0d0d;font-family:'Liberation Sans',sans-serif;transform:scaleX(0.9);transform-origin:0 0">10</div>
<svg style="position:absolute;left:396.7px;top:369.8px" width="8" height="14" viewBox="0 0 8 14"><path d="M0.5 4.2 L4 0.3 L7.5 4.2 Z M0.5 9.2 L4 13.1 L7.5 9.2 Z" fill="#000"/></svg>
<div style="left:418px;top:366.6px;width:61px;height:21px;background:#484848;border:1px solid #5b5b5b;box-sizing:border-box;"></div>
<div class="t" style="left:422.3px;top:370.81px;font-size:11.5px;line-height:11.5px;color:#9a9a9a;font-family:'Liberation Sans',sans-serif;transform:scaleX(0.9);transform-origin:0 0">Dial</div>
<svg style="position:absolute;left:465.5px;top:375.1px" width="8" height="5" viewBox="0 0 8 5"><path d="M0 0 L8 0 L4 4.3 Z" fill="#c0c0c0"/></svg>
<div style="left:485px;top:366.6px;width:43.8px;height:20.8px;background:#cadfe9;border:1px solid #6fb2e0;box-sizing:border-box;"></div>
<div class="t" style="left:487.5px;top:370.68px;font-size:11.5px;line-height:11.5px;color:#0d0d0d;font-family:'Liberation Sans',sans-serif;transform:scaleX(0.9);transform-origin:0 0">1</div>
<svg style="position:absolute;left:514.8px;top:369.8px" width="8" height="14" viewBox="0 0 8 14"><path d="M0.5 4.2 L4 0.3 L7.5 4.2 Z M0.5 9.2 L4 13.1 L7.5 9.2 Z" fill="#000"/></svg>
<div style="left:531.7px;top:366.6px;width:43.7px;height:20.8px;background:#cadfe9;"></div>
<div class="t" style="left:534.2px;top:370.68px;font-size:11.5px;line-height:11.5px;color:#0d0d0d;font-family:'Liberation Sans',sans-serif;transform:scaleX(0.9);transform-origin:0 0">3</div>
<svg style="position:absolute;left:561.4000000000001px;top:369.8px" width="8" height="14" viewBox="0 0 8 14"><path d="M0.5 4.2 L4 0.3 L7.5 4.2 Z M0.5 9.2 L4 13.1 L7.5 9.2 Z" fill="#000"/></svg>
<div style="left:585.5px;top:366.6px;width:66px;height:21px;background:#484848;border:1px solid #5b5b5b;box-sizing:border-box;"></div>
<div class="t" style="left:589.8px;top:370.81px;font-size:11.5px;line-height:11.5px;color:#9a9a9a;font-family:'Liberation Sans',sans-serif;transform:scaleX(0.9);transform-origin:0 0">Off</div>
<svg style="position:absolute;left:638.0px;top:375.1px" width="8" height="5" viewBox="0 0 8 5"><path d="M0 0 L8 0 L4 4.3 Z" fill="#c0c0c0"/></svg>
<div style="left:654px;top:366.6px;width:33.2px;height:21px;background:#393939;border:1px solid #474747;box-sizing:border-box;"></div>
<div style="left:659.7px;top:377.6px;width:4.3px;height:2px;background:#575757"></div>
<svg style="position:absolute;left:673.7px;top:375.1px" width="8" height="5" viewBox="0 0 8 5"><path d="M0 0 L8 0 L4 4.3 Z" fill="#5e5e5e"/></svg>
<div style="left:691.3px;top:366.6px;width:32.8px;height:20.8px;background:#76828a;"></div>
<div class="t" style="left:693.8px;top:370.68px;font-size:11.5px;line-height:11.5px;color:#2a2a2a;font-family:'Liberation Sans',sans-serif;transform:scaleX(0.9);transform-origin:0 0">1</div>
<svg style="position:absolute;left:710.0999999999999px;top:369.8px" width="8" height="14" viewBox="0 0 8 14"><path d="M0.5 4.2 L4 0.3 L7.5 4.2 Z M0.5 9.2 L4 13.1 L7.5 9.2 Z" fill="#1a1a1a"/></svg>
<div style="left:729.2px;top:366.6px;width:44.1px;height:20.8px;background:#76828a;"></div>
<div class="t" style="left:731.7px;top:370.68px;font-size:11.5px;line-height:11.5px;color:#2a2a2a;font-family:'Liberation Sans',sans-serif;transform:scaleX(0.9);transform-origin:0 0">0</div>
<svg style="position:absolute;left:759.3000000000001px;top:369.8px" width="8" height="14" viewBox="0 0 8 14"><path d="M0.5 4.2 L4 0.3 L7.5 4.2 Z M0.5 9.2 L4 13.1 L7.5 9.2 Z" fill="#1a1a1a"/></svg>
<div style="left:781.1px;top:366.6px;width:33.3px;height:20.8px;background:#cadfe9;"></div>
<div class="t" style="left:783.6px;top:370.68px;font-size:11.5px;line-height:11.5px;color:#0d0d0d;font-family:'Liberation Sans',sans-serif;transform:scaleX(0.9);transform-origin:0 0">0</div>
<div class="t" style="left:38px;top:389.57px;font-size:11.5px;line-height:11.5px;color:#d8d8d8;font-family:'Liberation Sans',sans-serif;">4</div>
<div style="left:56.5px;top:388.5px;width:13px;height:13px;background:#000"><svg width="15" height="15" viewBox="0 -2 15 15" style="position:absolute;left:0;top:-2px;overflow:visible"><path d="M0.6 7.1 L2.4 5.5 L5.0 8.5 L11.7 -1.1 L13.2 -0.3 L6.0 11.5 L4.3 11.5 Z" fill="#f2f2f2"/></svg></div>
<div style="left:76px;top:388.5px;width:13px;height:13px;background:#000"><svg width="15" height="15" viewBox="0 -2 15 15" style="position:absolute;left:0;top:-2px;overflow:visible"><path d="M0.6 7.1 L2.4 5.5 L5.0 8.5 L11.7 -1.1 L13.2 -0.3 L6.0 11.5 L4.3 11.5 Z" fill="#f2f2f2"/></svg></div>
<div style="left:95.5px;top:388.5px;width:13px;height:13px;background:#000"></div>
<div style="left:115px;top:388.5px;width:13px;height:13px;background:#000"><svg width="15" height="15" viewBox="0 -2 15 15" style="position:absolute;left:0;top:-2px;overflow:visible"><path d="M0.6 7.1 L2.4 5.5 L5.0 8.5 L11.7 -1.1 L13.2 -0.3 L6.0 11.5 L4.3 11.5 Z" fill="#f2f2f2"/></svg></div>
<div style="left:134.5px;top:388.5px;width:13px;height:13px;background:#000"></div>
<div style="left:157px;top:388.9px;width:31px;height:20.5px;background:#cadfe9;"></div>
<div class="t" style="left:159.5px;top:392.79px;font-size:11.5px;line-height:11.5px;color:#0d0d0d;font-family:'Liberation Sans',sans-serif;transform:scaleX(0.9);transform-origin:0 0">4</div>
<svg style="position:absolute;left:174px;top:392.09999999999997px" width="8" height="14" viewBox="0 0 8 14"><path d="M0.5 4.2 L4 0.3 L7.5 4.2 Z M0.5 9.2 L4 13.1 L7.5 9.2 Z" fill="#000"/></svg>
<div style="left:190.5px;top:388.9px;width:44.5px;height:21px;background:#484848;border:1px solid #5b5b5b;box-sizing:border-box;"></div>
<div class="t" style="left:194.8px;top:393.11px;font-size:11.5px;line-height:11.5px;color:#9a9a9a;font-family:'Liberation Sans',sans-serif;transform:scaleX(0.9);transform-origin:0 0">Abs</div>
<svg style="position:absolute;left:221.5px;top:397.4px" width="8" height="5" viewBox="0 0 8 5"><path d="M0 0 L8 0 L4 4.3 Z" fill="#c0c0c0"/></svg>
<div style="left:240px;top:388.9px;width:38.6px;height:21px;background:#393939;border:1px solid #474747;box-sizing:border-box;"></div>
<div class="t" style="left:244.3px;top:393.11px;font-size:11.5px;line-height:11.5px;color:#575757;font-family:'Liberation Sans',sans-serif;transform:scaleX(0.9);transform-origin:0 0">2x</div>
<svg style="position:absolute;left:265.1px;top:397.4px" width="8" height="5" viewBox="0 0 8 5"><path d="M0 0 L8 0 L4 4.3 Z" fill="#5e5e5e"/></svg>
<div style="left:284px;top:388.9px;width:42.3px;height:21px;background:#393939;border:1px solid #474747;box-sizing:border-box;"></div>
<div class="t" style="left:288.3px;top:393.11px;font-size:11.5px;line-height:11.5px;color:#575757;font-family:'Liberation Sans',sans-serif;transform:scaleX(0.9);transform-origin:0 0">Sqr</div>
<svg style="position:absolute;left:312.8px;top:397.4px" width="8" height="5" viewBox="0 0 8 5"><path d="M0 0 L8 0 L4 4.3 Z" fill="#5e5e5e"/></svg>
<div style="left:331.5px;top:391.09999999999997px;width:13.5px;height:13px;background:#1e1e1e"></div>
<div style="left:351px;top:391.09999999999997px;width:13.5px;height:13px;background:#1e1e1e"></div>
<div style="left:372.3px;top:388.9px;width:38.4px;height:20.8px;background:#cadfe9;"></div>
<div class="t" style="left:374.8px;top:392.98px;font-size:11.5px;line-height:11.5px;color:#0d0d0d;font-family:'Liberation Sans',sans-serif;transform:scaleX(0.9);transform-origin:0 0">11</div>
<svg style="position:absolute;left:396.7px;top:392.09999999999997px" width="8" height="14" viewBox="0 0 8 14"><path d="M0.5 4.2 L4 0.3 L7.5 4.2 Z M0.5 9.2 L4 13.1 L7.5 9.2 Z" fill="#000"/></svg>
<div style="left:418px;top:388.9px;width:61px;height:21px;background:#484848;border:1px solid #5b5b5b;box-sizing:border-box;"></div>
<div class="t" style="left:422.3px;top:393.11px;font-size:11.5px;line-height:11.5px;color:#9a9a9a;font-family:'Liberation Sans',sans-serif;transform:scaleX(0.9);transform-origin:0 0">Slider</div>
<svg style="position:absolute;left:465.5px;top:397.4px" width="8" height="5" viewBox="0 0 8 5"><path d="M0 0 L8 0 L4 4.3 Z" fill="#c0c0c0"/></svg>
<div style="left:485px;top:388.9px;width:43.8px;height:20.8px;background:#cadfe9;"></div>
<div class="t" style="left:487.5px;top:392.98px;font-size:11.5px;line-height:11.5px;color:#0d0d0d;font-family:'Liberation Sans',sans-serif;transform:scaleX(0.9);transform-origin:0 0">10</div>
<svg style="position:absolute;left:514.8px;top:392.09999999999997px" width="8" height="14" viewBox="0 0 8 14"><path d="M0.5 4.2 L4 0.3 L7.5 4.2 Z M0.5 9.2 L4 13.1 L7.5 9.2 Z" fill="#000"/></svg>
<div style="left:531.7px;top:388.9px;width:43.7px;height:20.8px;background:#cadfe9;"></div>
<div class="t" style="left:534.2px;top:392.98px;font-size:11.5px;line-height:11.5px;color:#0d0d0d;font-family:'Liberation Sans',sans-serif;transform:scaleX(0.9);transform-origin:0 0">3</div>
<svg style="position:absolute;left:561.4000000000001px;top:392.09999999999997px" width="8" height="14" viewBox="0 0 8 14"><path d="M0.5 4.2 L4 0.3 L7.5 4.2 Z M0.5 9.2 L4 13.1 L7.5 9.2 Z" fill="#000"/></svg>
<div style="left:585.5px;top:388.9px;width:66px;height:21px;background:#484848;border:1px solid #5b5b5b;box-sizing:border-box;"></div>
<div class="t" style="left:589.8px;top:393.11px;font-size:11.5px;line-height:11.5px;color:#9a9a9a;font-family:'Liberation Sans',sans-serif;transform:scaleX(0.9);transform-origin:0 0">Off</div>
<svg style="position:absolute;left:638.0px;top:397.4px" width="8" height="5" viewBox="0 0 8 5"><path d="M0 0 L8 0 L4 4.3 Z" fill="#c0c0c0"/></svg>
<div style="left:654px;top:388.9px;width:33.2px;height:21px;background:#393939;border:1px solid #474747;box-sizing:border-box;"></div>
<div style="left:659.7px;top:399.9px;width:4.3px;height:2px;background:#575757"></div>
<svg style="position:absolute;left:673.7px;top:397.4px" width="8" height="5" viewBox="0 0 8 5"><path d="M0 0 L8 0 L4 4.3 Z" fill="#5e5e5e"/></svg>
<div style="left:691.3px;top:388.9px;width:32.8px;height:20.8px;background:#76828a;"></div>
<div class="t" style="left:693.8px;top:392.98px;font-size:11.5px;line-height:11.5px;color:#2a2a2a;font-family:'Liberation Sans',sans-serif;transform:scaleX(0.9);transform-origin:0 0">1</div>
<svg style="position:absolute;left:710.0999999999999px;top:392.09999999999997px" width="8" height="14" viewBox="0 0 8 14"><path d="M0.5 4.2 L4 0.3 L7.5 4.2 Z M0.5 9.2 L4 13.1 L7.5 9.2 Z" fill="#1a1a1a"/></svg>
<div style="left:729.2px;top:388.9px;width:44.1px;height:20.8px;background:#76828a;"></div>
<div class="t" style="left:731.7px;top:392.98px;font-size:11.5px;line-height:11.5px;color:#2a2a2a;font-family:'Liberation Sans',sans-serif;transform:scaleX(0.9);transform-origin:0 0">0</div>
<svg style="position:absolute;left:759.3000000000001px;top:392.09999999999997px" width="8" height="14" viewBox="0 0 8 14"><path d="M0.5 4.2 L4 0.3 L7.5 4.2 Z M0.5 9.2 L4 13.1 L7.5 9.2 Z" fill="#1a1a1a"/></svg>
<div style="left:781.1px;top:388.9px;width:33.3px;height:20.8px;background:#cadfe9;"></div>
<div class="t" style="left:783.6px;top:392.98px;font-size:11.5px;line-height:11.5px;color:#0d0d0d;font-family:'Liberation Sans',sans-serif;transform:scaleX(0.9);transform-origin:0 0">0</div>
<div class="t" style="left:38px;top:411.87px;font-size:11.5px;line-height:11.5px;color:#d8d8d8;font-family:'Liberation Sans',sans-serif;">5</div>
<div style="left:56.5px;top:410.8px;width:13px;height:13px;background:#000"><svg width="15" height="15" viewBox="0 -2 15 15" style="position:absolute;left:0;top:-2px;overflow:visible"><path d="M0.6 7.1 L2.4 5.5 L5.0 8.5 L11.7 -1.1 L13.2 -0.3 L6.0 11.5 L4.3 11.5 Z" fill="#f2f2f2"/></svg></div>
<div style="left:76px;top:410.8px;width:13px;height:13px;background:#000"><svg width="15" height="15" viewBox="0 -2 15 15" style="position:absolute;left:0;top:-2px;overflow:visible"><path d="M0.6 7.1 L2.4 5.5 L5.0 8.5 L11.7 -1.1 L13.2 -0.3 L6.0 11.5 L4.3 11.5 Z" fill="#f2f2f2"/></svg></div>
<div style="left:95.5px;top:410.8px;width:13px;height:13px;background:#000"></div>
<div style="left:115px;top:410.8px;width:13px;height:13px;background:#000"><svg width="15" height="15" viewBox="0 -2 15 15" style="position:absolute;left:0;top:-2px;overflow:visible"><path d="M0.6 7.1 L2.4 5.5 L5.0 8.5 L11.7 -1.1 L13.2 -0.3 L6.0 11.5 L4.3 11.5 Z" fill="#f2f2f2"/></svg></div>
<div style="left:134.5px;top:410.8px;width:13px;height:13px;background:#000"></div>
<div style="left:157px;top:411.2px;width:31px;height:20.5px;background:#cadfe9;"></div>
<div class="t" style="left:159.5px;top:415.09px;font-size:11.5px;line-height:11.5px;color:#0d0d0d;font-family:'Liberation Sans',sans-serif;transform:scaleX(0.9);transform-origin:0 0">5</div>
<svg style="position:absolute;left:174px;top:414.4px" width="8" height="14" viewBox="0 0 8 14"><path d="M0.5 4.2 L4 0.3 L7.5 4.2 Z M0.5 9.2 L4 13.1 L7.5 9.2 Z" fill="#000"/></svg>
<div style="left:190.5px;top:411.2px;width:44.5px;height:21px;background:#484848;border:1px solid #5b5b5b;box-sizing:border-box;"></div>
<div class="t" style="left:194.8px;top:415.41px;font-size:11.5px;line-height:11.5px;color:#9a9a9a;font-family:'Liberation Sans',sans-serif;transform:scaleX(0.9);transform-origin:0 0">Abs</div>
<svg style="position:absolute;left:221.5px;top:419.7px" width="8" height="5" viewBox="0 0 8 5"><path d="M0 0 L8 0 L4 4.3 Z" fill="#c0c0c0"/></svg>
<div style="left:240px;top:411.2px;width:38.6px;height:21px;background:#393939;border:1px solid #474747;box-sizing:border-box;"></div>
<div class="t" style="left:244.3px;top:415.41px;font-size:11.5px;line-height:11.5px;color:#575757;font-family:'Liberation Sans',sans-serif;transform:scaleX(0.9);transform-origin:0 0">1x</div>
<svg style="position:absolute;left:265.1px;top:419.7px" width="8" height="5" viewBox="0 0 8 5"><path d="M0 0 L8 0 L4 4.3 Z" fill="#5e5e5e"/></svg>
<div style="left:284px;top:411.2px;width:42.3px;height:21px;background:#393939;border:1px solid #474747;box-sizing:border-box;"></div>
<div class="t" style="left:288.3px;top:415.41px;font-size:11.5px;line-height:11.5px;color:#575757;font-family:'Liberation Sans',sans-serif;transform:scaleX(0.9);transform-origin:0 0">Lin</div>
<svg style="position:absolute;left:312.8px;top:419.7px" width="8" height="5" viewBox="0 0 8 5"><path d="M0 0 L8 0 L4 4.3 Z" fill="#5e5e5e"/></svg>
<div style="left:331.5px;top:413.4px;width:13.5px;height:13px;background:#1e1e1e"></div>
<div style="left:351px;top:413.4px;width:13.5px;height:13px;background:#1e1e1e"></div>
<div style="left:372.3px;top:411.2px;width:38.4px;height:20.8px;background:#cadfe9;"></div>
<div class="t" style="left:374.8px;top:415.28px;font-size:11.5px;line-height:11.5px;color:#0d0d0d;font-family:'Liberation Sans',sans-serif;transform:scaleX(0.9);transform-origin:0 0">11</div>
<svg style="position:absolute;left:396.7px;top:414.4px" width="8" height="14" viewBox="0 0 8 14"><path d="M0.5 4.2 L4 0.3 L7.5 4.2 Z M0.5 9.2 L4 13.1 L7.5 9.2 Z" fill="#000"/></svg>
<div style="left:418px;top:411.2px;width:61px;height:21px;background:#484848;border:1px solid #5b5b5b;box-sizing:border-box;"></div>
<div class="t" style="left:422.3px;top:415.41px;font-size:11.5px;line-height:11.5px;color:#9a9a9a;font-family:'Liberation Sans',sans-serif;transform:scaleX(0.9);transform-origin:0 0">Rot Z</div>
<svg style="position:absolute;left:465.5px;top:419.7px" width="8" height="5" viewBox="0 0 8 5"><path d="M0 0 L8 0 L4 4.3 Z" fill="#c0c0c0"/></svg>
<div style="left:485px;top:411.2px;width:43.8px;height:20.8px;background:#cadfe9;"></div>
<div class="t" style="left:487.5px;top:415.28px;font-size:11.5px;line-height:11.5px;color:#0d0d0d;font-family:'Liberation Sans',sans-serif;transform:scaleX(0.9);transform-origin:0 0">10</div>
<svg style="position:absolute;left:514.8px;top:414.4px" width="8" height="14" viewBox="0 0 8 14"><path d="M0.5 4.2 L4 0.3 L7.5 4.2 Z M0.5 9.2 L4 13.1 L7.5 9.2 Z" fill="#000"/></svg>
<div style="left:531.7px;top:411.2px;width:43.7px;height:20.8px;background:#cadfe9;"></div>
<div class="t" style="left:534.2px;top:415.28px;font-size:11.5px;line-height:11.5px;color:#0d0d0d;font-family:'Liberation Sans',sans-serif;transform:scaleX(0.9);transform-origin:0 0">3</div>
<svg style="position:absolute;left:561.4000000000001px;top:414.4px" width="8" height="14" viewBox="0 0 8 14"><path d="M0.5 4.2 L4 0.3 L7.5 4.2 Z M0.5 9.2 L4 13.1 L7.5 9.2 Z" fill="#000"/></svg>
<div style="left:585.5px;top:411.2px;width:66px;height:21px;background:#484848;border:1px solid #5b5b5b;box-sizing:border-box;"></div>
<div class="t" style="left:589.8px;top:415.41px;font-size:11.5px;line-height:11.5px;color:#9a9a9a;font-family:'Liberation Sans',sans-serif;transform:scaleX(0.9);transform-origin:0 0">Off</div>
<svg style="position:absolute;left:638.0px;top:419.7px" width="8" height="5" viewBox="0 0 8 5"><path d="M0 0 L8 0 L4 4.3 Z" fill="#c0c0c0"/></svg>
<div style="left:654px;top:411.2px;width:33.2px;height:21px;background:#393939;border:1px solid #474747;box-sizing:border-box;"></div>
<div style="left:659.7px;top:422.2px;width:4.3px;height:2px;background:#575757"></div>
<svg style="position:absolute;left:673.7px;top:419.7px" width="8" height="5" viewBox="0 0 8 5"><path d="M0 0 L8 0 L4 4.3 Z" fill="#5e5e5e"/></svg>
<div style="left:691.3px;top:411.2px;width:32.8px;height:20.8px;background:#76828a;"></div>
<div class="t" style="left:693.8px;top:415.28px;font-size:11.5px;line-height:11.5px;color:#2a2a2a;font-family:'Liberation Sans',sans-serif;transform:scaleX(0.9);transform-origin:0 0">1</div>
<svg style="position:absolute;left:710.0999999999999px;top:414.4px" width="8" height="14" viewBox="0 0 8 14"><path d="M0.5 4.2 L4 0.3 L7.5 4.2 Z M0.5 9.2 L4 13.1 L7.5 9.2 Z" fill="#1a1a1a"/></svg>
<div style="left:729.2px;top:411.2px;width:44.1px;height:20.8px;background:#76828a;"></div>
<div class="t" style="left:731.7px;top:415.28px;font-size:11.5px;line-height:11.5px;color:#2a2a2a;font-family:'Liberation Sans',sans-serif;transform:scaleX(0.9);transform-origin:0 0">0</div>
<svg style="position:absolute;left:759.3000000000001px;top:414.4px" width="8" height="14" viewBox="0 0 8 14"><path d="M0.5 4.2 L4 0.3 L7.5 4.2 Z M0.5 9.2 L4 13.1 L7.5 9.2 Z" fill="#1a1a1a"/></svg>
<div style="left:781.1px;top:411.2px;width:33.3px;height:20.8px;background:#cadfe9;"></div>
<div class="t" style="left:783.6px;top:415.28px;font-size:11.5px;line-height:11.5px;color:#0d0d0d;font-family:'Liberation Sans',sans-serif;transform:scaleX(0.9);transform-origin:0 0">0</div>
<div class="t" style="left:38px;top:434.17px;font-size:11.5px;line-height:11.5px;color:#d8d8d8;font-family:'Liberation Sans',sans-serif;">6</div>
<div style="left:56.5px;top:433.1px;width:13px;height:13px;background:#000"><svg width="15" height="15" viewBox="0 -2 15 15" style="position:absolute;left:0;top:-2px;overflow:visible"><path d="M0.6 7.1 L2.4 5.5 L5.0 8.5 L11.7 -1.1 L13.2 -0.3 L6.0 11.5 L4.3 11.5 Z" fill="#f2f2f2"/></svg></div>
<div style="left:76px;top:433.1px;width:13px;height:13px;background:#000"><svg width="15" height="15" viewBox="0 -2 15 15" style="position:absolute;left:0;top:-2px;overflow:visible"><path d="M0.6 7.1 L2.4 5.5 L5.0 8.5 L11.7 -1.1 L13.2 -0.3 L6.0 11.5 L4.3 11.5 Z" fill="#f2f2f2"/></svg></div>
<div style="left:95.5px;top:433.1px;width:13px;height:13px;background:#000"></div>
<div style="left:115px;top:433.1px;width:13px;height:13px;background:#000"></div>
<div style="left:134.5px;top:433.1px;width:13px;height:13px;background:#000"></div>
<div style="left:157px;top:433.5px;width:31px;height:20.5px;background:#cadfe9;"></div>
<div class="t" style="left:159.5px;top:437.39px;font-size:11.5px;line-height:11.5px;color:#0d0d0d;font-family:'Liberation Sans',sans-serif;transform:scaleX(0.9);transform-origin:0 0">6</div>
<svg style="position:absolute;left:174px;top:436.7px" width="8" height="14" viewBox="0 0 8 14"><path d="M0.5 4.2 L4 0.3 L7.5 4.2 Z M0.5 9.2 L4 13.1 L7.5 9.2 Z" fill="#000"/></svg>
<div style="left:190.5px;top:433.5px;width:44.5px;height:21px;background:#484848;border:1px solid #5b5b5b;box-sizing:border-box;"></div>
<div class="t" style="left:194.8px;top:437.71px;font-size:11.5px;line-height:11.5px;color:#9a9a9a;font-family:'Liberation Sans',sans-serif;transform:scaleX(0.9);transform-origin:0 0">Abs</div>
<svg style="position:absolute;left:221.5px;top:442.0px" width="8" height="5" viewBox="0 0 8 5"><path d="M0 0 L8 0 L4 4.3 Z" fill="#c0c0c0"/></svg>
<div style="left:240px;top:433.5px;width:38.6px;height:21px;background:#393939;border:1px solid #474747;box-sizing:border-box;"></div>
<div class="t" style="left:244.3px;top:437.71px;font-size:11.5px;line-height:11.5px;color:#575757;font-family:'Liberation Sans',sans-serif;transform:scaleX(0.9);transform-origin:0 0">1x</div>
<svg style="position:absolute;left:265.1px;top:442.0px" width="8" height="5" viewBox="0 0 8 5"><path d="M0 0 L8 0 L4 4.3 Z" fill="#5e5e5e"/></svg>
<div style="left:284px;top:433.5px;width:42.3px;height:21px;background:#393939;border:1px solid #474747;box-sizing:border-box;"></div>
<div class="t" style="left:288.3px;top:437.71px;font-size:11.5px;line-height:11.5px;color:#575757;font-family:'Liberation Sans',sans-serif;transform:scaleX(0.9);transform-origin:0 0">Lin</div>
<svg style="position:absolute;left:312.8px;top:442.0px" width="8" height="5" viewBox="0 0 8 5"><path d="M0 0 L8 0 L4 4.3 Z" fill="#5e5e5e"/></svg>
<div style="left:331.5px;top:435.7px;width:13.5px;height:13px;background:#1e1e1e"></div>
<div style="left:351px;top:435.7px;width:13.5px;height:13px;background:#1e1e1e"></div>
<div style="left:372.3px;top:433.5px;width:38.4px;height:20.8px;background:#cadfe9;"></div>
<div class="t" style="left:374.8px;top:437.58px;font-size:11.5px;line-height:11.5px;color:#0d0d0d;font-family:'Liberation Sans',sans-serif;transform:scaleX(0.9);transform-origin:0 0">10</div>
<svg style="position:absolute;left:396.7px;top:436.7px" width="8" height="14" viewBox="0 0 8 14"><path d="M0.5 4.2 L4 0.3 L7.5 4.2 Z M0.5 9.2 L4 13.1 L7.5 9.2 Z" fill="#000"/></svg>
<div style="left:418px;top:433.5px;width:61px;height:21px;background:#484848;border:1px solid #5b5b5b;box-sizing:border-box;"></div>
<div class="t" style="left:422.3px;top:437.71px;font-size:11.5px;line-height:11.5px;color:#9a9a9a;font-family:'Liberation Sans',sans-serif;transform:scaleX(0.9);transform-origin:0 0">Rot X</div>
<svg style="position:absolute;left:465.5px;top:442.0px" width="8" height="5" viewBox="0 0 8 5"><path d="M0 0 L8 0 L4 4.3 Z" fill="#c0c0c0"/></svg>
<div style="left:485px;top:433.5px;width:43.8px;height:20.8px;background:#cadfe9;"></div>
<div class="t" style="left:487.5px;top:437.58px;font-size:11.5px;line-height:11.5px;color:#0d0d0d;font-family:'Liberation Sans',sans-serif;transform:scaleX(0.9);transform-origin:0 0">3</div>
<svg style="position:absolute;left:514.8px;top:436.7px" width="8" height="14" viewBox="0 0 8 14"><path d="M0.5 4.2 L4 0.3 L7.5 4.2 Z M0.5 9.2 L4 13.1 L7.5 9.2 Z" fill="#000"/></svg>
<div style="left:531.7px;top:433.5px;width:43.7px;height:20.8px;background:#cadfe9;"></div>
<div class="t" style="left:534.2px;top:437.58px;font-size:11.5px;line-height:11.5px;color:#0d0d0d;font-family:'Liberation Sans',sans-serif;transform:scaleX(0.9);transform-origin:0 0">3</div>
<svg style="position:absolute;left:561.4000000000001px;top:436.7px" width="8" height="14" viewBox="0 0 8 14"><path d="M0.5 4.2 L4 0.3 L7.5 4.2 Z M0.5 9.2 L4 13.1 L7.5 9.2 Z" fill="#000"/></svg>
<div style="left:585.5px;top:433.5px;width:66px;height:21px;background:#484848;border:1px solid #5b5b5b;box-sizing:border-box;"></div>
<div class="t" style="left:589.8px;top:437.71px;font-size:11.5px;line-height:11.5px;color:#9a9a9a;font-family:'Liberation Sans',sans-serif;transform:scaleX(0.9);transform-origin:0 0">Off</div>
<svg style="position:absolute;left:638.0px;top:442.0px" width="8" height="5" viewBox="0 0 8 5"><path d="M0 0 L8 0 L4 4.3 Z" fill="#c0c0c0"/></svg>
<div style="left:654px;top:433.5px;width:33.2px;height:21px;background:#393939;border:1px solid #474747;box-sizing:border-box;"></div>
<div style="left:659.7px;top:444.5px;width:4.3px;height:2px;background:#575757"></div>
<svg style="position:absolute;left:673.7px;top:442.0px" width="8" height="5" viewBox="0 0 8 5"><path d="M0 0 L8 0 L4 4.3 Z" fill="#5e5e5e"/></svg>
<div style="left:691.3px;top:433.5px;width:32.8px;height:20.8px;background:#76828a;"></div>
<div class="t" style="left:693.8px;top:437.58px;font-size:11.5px;line-height:11.5px;color:#2a2a2a;font-family:'Liberation Sans',sans-serif;transform:scaleX(0.9);transform-origin:0 0">1</div>
<svg style="position:absolute;left:710.0999999999999px;top:436.7px" width="8" height="14" viewBox="0 0 8 14"><path d="M0.5 4.2 L4 0.3 L7.5 4.2 Z M0.5 9.2 L4 13.1 L7.5 9.2 Z" fill="#1a1a1a"/></svg>
<div style="left:729.2px;top:433.5px;width:44.1px;height:20.8px;background:#76828a;"></div>
<div class="t" style="left:731.7px;top:437.58px;font-size:11.5px;line-height:11.5px;color:#2a2a2a;font-family:'Liberation Sans',sans-serif;transform:scaleX(0.9);transform-origin:0 0">0</div>
<svg style="position:absolute;left:759.3000000000001px;top:436.7px" width="8" height="14" viewBox="0 0 8 14"><path d="M0.5 4.2 L4 0.3 L7.5 4.2 Z M0.5 9.2 L4 13.1 L7.5 9.2 Z" fill="#1a1a1a"/></svg>
<div style="left:781.1px;top:433.5px;width:33.3px;height:20.8px;background:#cadfe9;"></div>
<div class="t" style="left:783.6px;top:437.58px;font-size:11.5px;line-height:11.5px;color:#0d0d0d;font-family:'Liberation Sans',sans-serif;transform:scaleX(0.9);transform-origin:0 0">0</div>
<div class="t" style="left:38px;top:456.47px;font-size:11.5px;line-height:11.5px;color:#d8d8d8;font-family:'Liberation Sans',sans-serif;">7</div>
<div style="left:56.5px;top:455.40000000000003px;width:13px;height:13px;background:#000"><svg width="15" height="15" viewBox="0 -2 15 15" style="position:absolute;left:0;top:-2px;overflow:visible"><path d="M0.6 7.1 L2.4 5.5 L5.0 8.5 L11.7 -1.1 L13.2 -0.3 L6.0 11.5 L4.3 11.5 Z" fill="#f2f2f2"/></svg></div>
<div style="left:76px;top:455.40000000000003px;width:13px;height:13px;background:#000"><svg width="15" height="15" viewBox="0 -2 15 15" style="position:absolute;left:0;top:-2px;overflow:visible"><path d="M0.6 7.1 L2.4 5.5 L5.0 8.5 L11.7 -1.1 L13.2 -0.3 L6.0 11.5 L4.3 11.5 Z" fill="#f2f2f2"/></svg></div>
<div style="left:95.5px;top:455.40000000000003px;width:13px;height:13px;background:#000"></div>
<div style="left:115px;top:455.40000000000003px;width:13px;height:13px;background:#000"><svg width="15" height="15" viewBox="0 -2 15 15" style="position:absolute;left:0;top:-2px;overflow:visible"><path d="M0.6 7.1 L2.4 5.5 L5.0 8.5 L11.7 -1.1 L13.2 -0.3 L6.0 11.5 L4.3 11.5 Z" fill="#f2f2f2"/></svg></div>
<div style="left:134.5px;top:455.40000000000003px;width:13px;height:13px;background:#000"></div>
<div style="left:157px;top:455.8px;width:31px;height:20.5px;background:#cadfe9;"></div>
<div class="t" style="left:159.5px;top:459.69px;font-size:11.5px;line-height:11.5px;color:#0d0d0d;font-family:'Liberation Sans',sans-serif;transform:scaleX(0.9);transform-origin:0 0">7</div>
<svg style="position:absolute;left:174px;top:459.0px" width="8" height="14" viewBox="0 0 8 14"><path d="M0.5 4.2 L4 0.3 L7.5 4.2 Z M0.5 9.2 L4 13.1 L7.5 9.2 Z" fill="#000"/></svg>
<div style="left:190.5px;top:455.8px;width:44.5px;height:21px;background:#484848;border:1px solid #5b5b5b;box-sizing:border-box;"></div>
<div class="t" style="left:194.8px;top:460.01px;font-size:11.5px;line-height:11.5px;color:#9a9a9a;font-family:'Liberation Sans',sans-serif;transform:scaleX(0.9);transform-origin:0 0">Abs</div>
<svg style="position:absolute;left:221.5px;top:464.3px" width="8" height="5" viewBox="0 0 8 5"><path d="M0 0 L8 0 L4 4.3 Z" fill="#c0c0c0"/></svg>
<div style="left:240px;top:455.8px;width:38.6px;height:21px;background:#393939;border:1px solid #474747;box-sizing:border-box;"></div>
<div class="t" style="left:244.3px;top:460.01px;font-size:11.5px;line-height:11.5px;color:#575757;font-family:'Liberation Sans',sans-serif;transform:scaleX(0.9);transform-origin:0 0">1x</div>
<svg style="position:absolute;left:265.1px;top:464.3px" width="8" height="5" viewBox="0 0 8 5"><path d="M0 0 L8 0 L4 4.3 Z" fill="#5e5e5e"/></svg>
<div style="left:284px;top:455.8px;width:42.3px;height:21px;background:#393939;border:1px solid #474747;box-sizing:border-box;"></div>
<div class="t" style="left:288.3px;top:460.01px;font-size:11.5px;line-height:11.5px;color:#575757;font-family:'Liberation Sans',sans-serif;transform:scaleX(0.9);transform-origin:0 0">Lin</div>
<svg style="position:absolute;left:312.8px;top:464.3px" width="8" height="5" viewBox="0 0 8 5"><path d="M0 0 L8 0 L4 4.3 Z" fill="#5e5e5e"/></svg>
<div style="left:331.5px;top:458.0px;width:13.5px;height:13px;background:#1e1e1e"></div>
<div style="left:351px;top:458.0px;width:13.5px;height:13px;background:#1e1e1e"></div>
<div style="left:372.3px;top:455.8px;width:38.4px;height:20.8px;background:#cadfe9;"></div>
<div class="t" style="left:374.8px;top:459.88px;font-size:11.5px;line-height:11.5px;color:#0d0d0d;font-family:'Liberation Sans',sans-serif;transform:scaleX(0.9);transform-origin:0 0">11</div>
<svg style="position:absolute;left:396.7px;top:459.0px" width="8" height="14" viewBox="0 0 8 14"><path d="M0.5 4.2 L4 0.3 L7.5 4.2 Z M0.5 9.2 L4 13.1 L7.5 9.2 Z" fill="#000"/></svg>
<div style="left:418px;top:455.8px;width:61px;height:21px;background:#484848;border:1px solid #5b5b5b;box-sizing:border-box;"></div>
<div class="t" style="left:422.3px;top:460.01px;font-size:11.5px;line-height:11.5px;color:#9a9a9a;font-family:'Liberation Sans',sans-serif;transform:scaleX(0.9);transform-origin:0 0">Z</div>
<svg style="position:absolute;left:465.5px;top:464.3px" width="8" height="5" viewBox="0 0 8 5"><path d="M0 0 L8 0 L4 4.3 Z" fill="#c0c0c0"/></svg>
<div style="left:485px;top:455.8px;width:43.8px;height:20.8px;background:#cadfe9;"></div>
<div class="t" style="left:487.5px;top:459.88px;font-size:11.5px;line-height:11.5px;color:#0d0d0d;font-family:'Liberation Sans',sans-serif;transform:scaleX(0.9);transform-origin:0 0">3</div>
<svg style="position:absolute;left:514.8px;top:459.0px" width="8" height="14" viewBox="0 0 8 14"><path d="M0.5 4.2 L4 0.3 L7.5 4.2 Z M0.5 9.2 L4 13.1 L7.5 9.2 Z" fill="#000"/></svg>
<div style="left:531.7px;top:455.8px;width:43.7px;height:20.8px;background:#cadfe9;"></div>
<div class="t" style="left:534.2px;top:459.88px;font-size:11.5px;line-height:11.5px;color:#0d0d0d;font-family:'Liberation Sans',sans-serif;transform:scaleX(0.9);transform-origin:0 0">1</div>
<svg style="position:absolute;left:561.4000000000001px;top:459.0px" width="8" height="14" viewBox="0 0 8 14"><path d="M0.5 4.2 L4 0.3 L7.5 4.2 Z M0.5 9.2 L4 13.1 L7.5 9.2 Z" fill="#000"/></svg>
<div style="left:585.5px;top:455.8px;width:66px;height:21px;background:#484848;border:1px solid #5b5b5b;box-sizing:border-box;"></div>
<div class="t" style="left:589.8px;top:460.01px;font-size:11.5px;line-height:11.5px;color:#9a9a9a;font-family:'Liberation Sans',sans-serif;transform:scaleX(0.9);transform-origin:0 0">Off</div>
<svg style="position:absolute;left:638.0px;top:464.3px" width="8" height="5" viewBox="0 0 8 5"><path d="M0 0 L8 0 L4 4.3 Z" fill="#c0c0c0"/></svg>
<div style="left:654px;top:455.8px;width:33.2px;height:21px;background:#393939;border:1px solid #474747;box-sizing:border-box;"></div>
<div style="left:659.7px;top:466.8px;width:4.3px;height:2px;background:#575757"></div>
<svg style="position:absolute;left:673.7px;top:464.3px" width="8" height="5" viewBox="0 0 8 5"><path d="M0 0 L8 0 L4 4.3 Z" fill="#5e5e5e"/></svg>
<div style="left:691.3px;top:455.8px;width:32.8px;height:20.8px;background:#76828a;"></div>
<div class="t" style="left:693.8px;top:459.88px;font-size:11.5px;line-height:11.5px;color:#2a2a2a;font-family:'Liberation Sans',sans-serif;transform:scaleX(0.9);transform-origin:0 0">1</div>
<svg style="position:absolute;left:710.0999999999999px;top:459.0px" width="8" height="14" viewBox="0 0 8 14"><path d="M0.5 4.2 L4 0.3 L7.5 4.2 Z M0.5 9.2 L4 13.1 L7.5 9.2 Z" fill="#1a1a1a"/></svg>
<div style="left:729.2px;top:455.8px;width:44.1px;height:20.8px;background:#76828a;"></div>
<div class="t" style="left:731.7px;top:459.88px;font-size:11.5px;line-height:11.5px;color:#2a2a2a;font-family:'Liberation Sans',sans-serif;transform:scaleX(0.9);transform-origin:0 0">0</div>
<svg style="position:absolute;left:759.3000000000001px;top:459.0px" width="8" height="14" viewBox="0 0 8 14"><path d="M0.5 4.2 L4 0.3 L7.5 4.2 Z M0.5 9.2 L4 13.1 L7.5 9.2 Z" fill="#1a1a1a"/></svg>
<div style="left:781.1px;top:455.8px;width:33.3px;height:20.8px;background:#cadfe9;"></div>
<div class="t" style="left:783.6px;top:459.88px;font-size:11.5px;line-height:11.5px;color:#0d0d0d;font-family:'Liberation Sans',sans-serif;transform:scaleX(0.9);transform-origin:0 0">0</div>
<div class="t" style="left:38px;top:478.77px;font-size:11.5px;line-height:11.5px;color:#d8d8d8;font-family:'Liberation Sans',sans-serif;">8</div>
<div style="left:56.5px;top:477.70000000000005px;width:13px;height:13px;background:#000"><svg width="15" height="15" viewBox="0 -2 15 15" style="position:absolute;left:0;top:-2px;overflow:visible"><path d="M0.6 7.1 L2.4 5.5 L5.0 8.5 L11.7 -1.1 L13.2 -0.3 L6.0 11.5 L4.3 11.5 Z" fill="#f2f2f2"/></svg></div>
<div style="left:76px;top:477.70000000000005px;width:13px;height:13px;background:#000"><svg width="15" height="15" viewBox="0 -2 15 15" style="position:absolute;left:0;top:-2px;overflow:visible"><path d="M0.6 7.1 L2.4 5.5 L5.0 8.5 L11.7 -1.1 L13.2 -0.3 L6.0 11.5 L4.3 11.5 Z" fill="#f2f2f2"/></svg></div>
<div style="left:95.5px;top:477.70000000000005px;width:13px;height:13px;background:#000"></div>
<div style="left:115px;top:477.70000000000005px;width:13px;height:13px;background:#000"></div>
<div style="left:134.5px;top:477.70000000000005px;width:13px;height:13px;background:#000"></div>
<div style="left:157px;top:478.1px;width:31px;height:20.5px;background:#cadfe9;"></div>
<div class="t" style="left:159.5px;top:481.99px;font-size:11.5px;line-height:11.5px;color:#0d0d0d;font-family:'Liberation Sans',sans-serif;transform:scaleX(0.9);transform-origin:0 0">8</div>
<svg style="position:absolute;left:174px;top:481.3px" width="8" height="14" viewBox="0 0 8 14"><path d="M0.5 4.2 L4 0.3 L7.5 4.2 Z M0.5 9.2 L4 13.1 L7.5 9.2 Z" fill="#000"/></svg>
<div style="left:190.5px;top:478.1px;width:44.5px;height:21px;background:#484848;border:1px solid #5b5b5b;box-sizing:border-box;"></div>
<div class="t" style="left:194.8px;top:482.31px;font-size:11.5px;line-height:11.5px;color:#9a9a9a;font-family:'Liberation Sans',sans-serif;transform:scaleX(0.9);transform-origin:0 0">Abs</div>
<svg style="position:absolute;left:221.5px;top:486.6px" width="8" height="5" viewBox="0 0 8 5"><path d="M0 0 L8 0 L4 4.3 Z" fill="#c0c0c0"/></svg>
<div style="left:240px;top:478.1px;width:38.6px;height:21px;background:#393939;border:1px solid #474747;box-sizing:border-box;"></div>
<div class="t" style="left:244.3px;top:482.31px;font-size:11.5px;line-height:11.5px;color:#575757;font-family:'Liberation Sans',sans-serif;transform:scaleX(0.9);transform-origin:0 0">1x</div>
<svg style="position:absolute;left:265.1px;top:486.6px" width="8" height="5" viewBox="0 0 8 5"><path d="M0 0 L8 0 L4 4.3 Z" fill="#5e5e5e"/></svg>
<div style="left:284px;top:478.1px;width:42.3px;height:21px;background:#393939;border:1px solid #474747;box-sizing:border-box;"></div>
<div class="t" style="left:288.3px;top:482.31px;font-size:11.5px;line-height:11.5px;color:#575757;font-family:'Liberation Sans',sans-serif;transform:scaleX(0.9);transform-origin:0 0">Lin</div>
<svg style="position:absolute;left:312.8px;top:486.6px" width="8" height="5" viewBox="0 0 8 5"><path d="M0 0 L8 0 L4 4.3 Z" fill="#5e5e5e"/></svg>
<div style="left:331.5px;top:480.3px;width:13.5px;height:13px;background:#1e1e1e"></div>
<div style="left:351px;top:480.3px;width:13.5px;height:13px;background:#1e1e1e"></div>
<div style="left:372.3px;top:478.1px;width:38.4px;height:20.8px;background:#cadfe9;border:1px solid #6fb2e0;box-sizing:border-box;"></div>
<div class="t" style="left:374.8px;top:482.18px;font-size:11.5px;line-height:11.5px;color:#0d0d0d;font-family:'Liberation Sans',sans-serif;transform:scaleX(0.9);transform-origin:0 0">10</div>
<svg style="position:absolute;left:396.7px;top:481.3px" width="8" height="14" viewBox="0 0 8 14"><path d="M0.5 4.2 L4 0.3 L7.5 4.2 Z M0.5 9.2 L4 13.1 L7.5 9.2 Z" fill="#000"/></svg>
<div style="left:418px;top:478.1px;width:61px;height:21px;background:#484848;border:1px solid #5b5b5b;box-sizing:border-box;"></div>
<div class="t" style="left:422.3px;top:482.31px;font-size:11.5px;line-height:11.5px;color:#9a9a9a;font-family:'Liberation Sans',sans-serif;transform:scaleX(0.9);transform-origin:0 0">Rot Y</div>
<svg style="position:absolute;left:465.5px;top:486.6px" width="8" height="5" viewBox="0 0 8 5"><path d="M0 0 L8 0 L4 4.3 Z" fill="#c0c0c0"/></svg>
<div style="left:485px;top:478.1px;width:43.8px;height:20.8px;background:#cadfe9;"></div>
<div class="t" style="left:487.5px;top:482.18px;font-size:11.5px;line-height:11.5px;color:#0d0d0d;font-family:'Liberation Sans',sans-serif;transform:scaleX(0.9);transform-origin:0 0">3</div>
<svg style="position:absolute;left:514.8px;top:481.3px" width="8" height="14" viewBox="0 0 8 14"><path d="M0.5 4.2 L4 0.3 L7.5 4.2 Z M0.5 9.2 L4 13.1 L7.5 9.2 Z" fill="#000"/></svg>
<div style="left:531.7px;top:478.1px;width:43.7px;height:20.8px;background:#cadfe9;"></div>
<div class="t" style="left:534.2px;top:482.18px;font-size:11.5px;line-height:11.5px;color:#0d0d0d;font-family:'Liberation Sans',sans-serif;transform:scaleX(0.9);transform-origin:0 0">3</div>
<svg style="position:absolute;left:561.4000000000001px;top:481.3px" width="8" height="14" viewBox="0 0 8 14"><path d="M0.5 4.2 L4 0.3 L7.5 4.2 Z M0.5 9.2 L4 13.1 L7.5 9.2 Z" fill="#000"/></svg>
<div style="left:585.5px;top:478.1px;width:66px;height:21px;background:#484848;border:1px solid #5b5b5b;box-sizing:border-box;"></div>
<div class="t" style="left:589.8px;top:482.31px;font-size:11.5px;line-height:11.5px;color:#9a9a9a;font-family:'Liberation Sans',sans-serif;transform:scaleX(0.9);transform-origin:0 0">Off</div>
<svg style="position:absolute;left:638.0px;top:486.6px" width="8" height="5" viewBox="0 0 8 5"><path d="M0 0 L8 0 L4 4.3 Z" fill="#c0c0c0"/></svg>
<div style="left:654px;top:478.1px;width:33.2px;height:21px;background:#393939;border:1px solid #474747;box-sizing:border-box;"></div>
<div style="left:659.7px;top:489.1px;width:4.3px;height:2px;background:#575757"></div>
<svg style="position:absolute;left:673.7px;top:486.6px" width="8" height="5" viewBox="0 0 8 5"><path d="M0 0 L8 0 L4 4.3 Z" fill="#5e5e5e"/></svg>
<div style="left:691.3px;top:478.1px;width:32.8px;height:20.8px;background:#76828a;"></div>
<div class="t" style="left:693.8px;top:482.18px;font-size:11.5px;line-height:11.5px;color:#2a2a2a;font-family:'Liberation Sans',sans-serif;transform:scaleX(0.9);transform-origin:0 0">1</div>
<svg style="position:absolute;left:710.0999999999999px;top:481.3px" width="8" height="14" viewBox="0 0 8 14"><path d="M0.5 4.2 L4 0.3 L7.5 4.2 Z M0.5 9.2 L4 13.1 L7.5 9.2 Z" fill="#1a1a1a"/></svg>
<div style="left:729.2px;top:478.1px;width:44.1px;height:20.8px;background:#76828a;"></div>
<div class="t" style="left:731.7px;top:482.18px;font-size:11.5px;line-height:11.5px;color:#2a2a2a;font-family:'Liberation Sans',sans-serif;transform:scaleX(0.9);transform-origin:0 0">0</div>
<svg style="position:absolute;left:759.3000000000001px;top:481.3px" width="8" height="14" viewBox="0 0 8 14"><path d="M0.5 4.2 L4 0.3 L7.5 4.2 Z M0.5 9.2 L4 13.1 L7.5 9.2 Z" fill="#1a1a1a"/></svg>
<div style="left:781.1px;top:478.1px;width:33.3px;height:20.8px;background:#cadfe9;"></div>
<div class="t" style="left:783.6px;top:482.18px;font-size:11.5px;line-height:11.5px;color:#0d0d0d;font-family:'Liberation Sans',sans-serif;transform:scaleX(0.9);transform-origin:0 0">0</div>
<div style="left:33.7px;top:425.4px;width:554.3px;height:33px;border:3px solid #5fe024;border-radius:12px;box-sizing:border-box"></div>
<div style="left:33.7px;top:472px;width:553.4px;height:35.6px;border:3px solid #5fe024;border-radius:12px;box-sizing:border-box"></div>
<div style="left:17px;top:517px;width:907px;height:211px;background:#2f2f2f;border-top:1px solid #454545;border-left:1px solid #3a3a3a;border-bottom:1px solid #454545;box-sizing:border-box"></div>
<div style="left:891.5px;top:517px;width:32px;height:211px;background:linear-gradient(90deg,#2f2f2f,#434343 88%,#3a3a3a);"></div>
<div style="left:923.3px;top:519.3px;width:25px;height:205px;background:#272727;border:1px solid #4a4a4a;border-left:none;box-sizing:border-box"></div>
<div class="t" style="left:910px;top:621px;width:0;height:0"><div style="position:absolute;left-70px;left:-70px;top:-8px;width:140px;text-align:center;font-size:14.8px;line-height:16px;color:#dcdcdc;transform:rotate(-90deg)">Physical Ax...</div></div>
<div class="t" style="left:935px;top:622px;width:0;height:0"><div style="position:absolute;left:-70px;top:-8px;width:140px;text-align:center;font-size:14.8px;line-height:16px;color:#d0d0d0;transform:rotate(-90deg)">Response curve</div></div>
<div class="t" style="left:63.7px;top:527.11px;font-size:10.5px;line-height:10.5px;color:#d0d0d0;font-family:'Liberation Sans',sans-serif;transform:scaleX(0.95);transform-origin:0 0">ACn</div>
<div class="t" style="left:87.5px;top:527.11px;font-size:10.5px;line-height:10.5px;color:#d0d0d0;font-family:'Liberation Sans',sans-serif;transform:scaleX(0.95);transform-origin:0 0">ACl</div>
<div class="t" style="left:115.6px;top:527.11px;font-size:10.5px;line-height:10.5px;color:#bdbdbd;font-family:'Liberation Sans',sans-serif;transform:scaleX(0.95);transform-origin:0 0">R</div>
<div class="t" style="left:136px;top:527.11px;font-size:10.5px;line-height:10.5px;color:#c8c8c8;font-family:'Liberation Sans',sans-serif;transform:scaleX(0.95);transform-origin:0 0">Dir</div>
<div class="t" style="left:159.7px;top:527.11px;font-size:10.5px;line-height:10.5px;color:#c8c8c8;font-family:'Liberation Sans',sans-serif;transform:scaleX(0.95);transform-origin:0 0">Eq</div>
<div class="t" style="left:182px;top:527.11px;font-size:10.5px;line-height:10.5px;color:#d0d0d0;font-family:'Liberation Sans',sans-serif;transform:scaleX(0.95);transform-origin:0 0">Ext</div>
<div class="t" style="left:246px;top:527.11px;font-size:10.5px;line-height:10.5px;color:#e4e4e4;font-family:'Liberation Sans',sans-serif;transform:scaleX(0.95);transform-origin:0 0">Trimmer</div>
<div class="t" style="left:331.4px;top:527.11px;font-size:10.5px;line-height:10.5px;color:#e4e4e4;font-family:'Liberation Sans',sans-serif;transform:scaleX(0.95);transform-origin:0 0">Input</div>
<div class="t" style="left:392px;top:527.11px;font-size:10.5px;line-height:10.5px;color:#e4e4e4;font-family:'Liberation Sans',sans-serif;transform:scaleX(0.95);transform-origin:0 0">Filter</div>
<div class="t" style="left:433px;top:527.11px;font-size:10.5px;line-height:10.5px;color:#e4e4e4;font-family:'Liberation Sans',sans-serif;transform:scaleX(0.95);transform-origin:0 0">Thr</div>
<div class="t" style="left:474.4px;top:527.11px;font-size:10.5px;line-height:10.5px;color:#e0e0e0;font-family:'Liberation Sans',sans-serif;transform:scaleX(0.95);transform-origin:0 0">HF</div>
<div class="t" style="left:515.4px;top:527.11px;font-size:10.5px;line-height:10.5px;color:#e0e0e0;font-family:'Liberation Sans',sans-serif;transform:scaleX(0.95);transform-origin:0 0">MPL</div>
<div class="t" style="left:558.9px;top:527.11px;font-size:10.5px;line-height:10.5px;color:#e0e0e0;font-family:'Liberation Sans',sans-serif;transform:scaleX(0.95);transform-origin:0 0">KdHi</div>
<div class="t" style="left:589.2px;top:527.11px;font-size:10.5px;line-height:10.5px;color:#e0e0e0;font-family:'Liberation Sans',sans-serif;transform:scaleX(0.95);transform-origin:0 0">KdLo</div>
<div class="t" style="left:636px;top:527.11px;font-size:10.5px;line-height:10.5px;color:#e0e0e0;font-family:'Liberation Sans',sans-serif;transform:scaleX(0.95);transform-origin:0 0">Bias</div>
<div class="t" style="left:672.3px;top:527.11px;font-size:10.5px;line-height:10.5px;color:#e0e0e0;font-family:'Liberation Sans',sans-serif;transform:scaleX(0.95);transform-origin:0 0">Base</div>
<div style="left:24px;top:543.7px;width:13px;height:13px;background:#000"></div>
<div class="t" style="left:44.5px;top:542.87px;font-size:11.5px;line-height:11.5px;color:#d8d8d8;font-family:'Liberation Sans',sans-serif;">1</div>
<div style="left:67px;top:543.7px;width:13px;height:13px;background:#000"><svg width="15" height="15" viewBox="0 -2 15 15" style="position:absolute;left:0;top:-2px;overflow:visible"><path d="M0.6 7.1 L2.4 5.5 L5.0 8.5 L11.7 -1.1 L13.2 -0.3 L6.0 11.5 L4.3 11.5 Z" fill="#f2f2f2"/></svg></div>
<div style="left:90.5px;top:543.7px;width:13px;height:13px;background:#000"><svg width="15" height="15" viewBox="0 -2 15 15" style="position:absolute;left:0;top:-2px;overflow:visible"><path d="M0.6 7.1 L2.4 5.5 L5.0 8.5 L11.7 -1.1 L13.2 -0.3 L6.0 11.5 L4.3 11.5 Z" fill="#f2f2f2"/></svg></div>
<div style="left:113.8px;top:543.7px;width:13px;height:13px;background:#000"></div>
<div style="left:137px;top:543.7px;width:13px;height:13px;background:#000"></div>
<div style="left:160.3px;top:543.7px;width:13px;height:13px;background:#000"></div>
<div style="left:183px;top:543.7px;width:13px;height:13px;background:#000"></div>
<div style="left:228px;top:542.0px;width:64px;height:20.6px;background:#484848;border:1px solid #5b5b5b;box-sizing:border-box;"></div>
<div class="t" style="left:232.3px;top:545.95px;font-size:11.5px;line-height:11.5px;color:#9a9a9a;font-family:'Liberation Sans',sans-serif;transform:scaleX(0.9);transform-origin:0 0">Disable</div>
<svg style="position:absolute;left:278.5px;top:550.3px" width="8" height="5" viewBox="0 0 8 5"><path d="M0 0 L8 0 L4 4.3 Z" fill="#c0c0c0"/></svg>
<div style="left:301.3px;top:542.0px;width:74.4px;height:20.6px;background:#484848;border:1px solid #5b5b5b;box-sizing:border-box;"></div>
<div class="t" style="left:305.6px;top:545.95px;font-size:11.5px;line-height:11.5px;color:#9a9a9a;font-family:'Liberation Sans',sans-serif;transform:scaleX(0.9);transform-origin:0 0">V_MaRS</div>
<svg style="position:absolute;left:362.20000000000005px;top:550.3px" width="8" height="5" viewBox="0 0 8 5"><path d="M0 0 L8 0 L4 4.3 Z" fill="#c0c0c0"/></svg>
<div style="left:385.7px;top:542.0px;width:34.9px;height:20.6px;background:#cadfe9;"></div>
<div class="t" style="left:388.2px;top:545.95px;font-size:11.5px;line-height:11.5px;color:#0d0d0d;font-family:'Liberation Sans',sans-serif;transform:scaleX(0.9);transform-origin:0 0">6</div>
<svg style="position:absolute;left:406.59999999999997px;top:545.2px" width="8" height="14" viewBox="0 0 8 14"><path d="M0.5 4.2 L4 0.3 L7.5 4.2 Z M0.5 9.2 L4 13.1 L7.5 9.2 Z" fill="#000"/></svg>
<div style="left:424.7px;top:542.0px;width:32.3px;height:20.6px;background:#cadfe9;"></div>
<div class="t" style="left:427.2px;top:545.95px;font-size:11.5px;line-height:11.5px;color:#0d0d0d;font-family:'Liberation Sans',sans-serif;transform:scaleX(0.9);transform-origin:0 0">100</div>
<div style="left:464.5px;top:542.0px;width:32.8px;height:20.6px;background:#cadfe9;"></div>
<div class="t" style="left:467.0px;top:545.95px;font-size:11.5px;line-height:11.5px;color:#0d0d0d;font-family:'Liberation Sans',sans-serif;transform:scaleX(0.9);transform-origin:0 0">1</div>
<svg style="position:absolute;left:483.3px;top:545.2px" width="8" height="14" viewBox="0 0 8 14"><path d="M0.5 4.2 L4 0.3 L7.5 4.2 Z M0.5 9.2 L4 13.1 L7.5 9.2 Z" fill="#000"/></svg>
<div style="left:504.7px;top:542.0px;width:41px;height:20.6px;background:#cadfe9;"></div>
<div class="t" style="left:507.2px;top:545.95px;font-size:11.5px;line-height:11.5px;color:#0d0d0d;font-family:'Liberation Sans',sans-serif;transform:scaleX(0.9);transform-origin:0 0">10</div>
<svg style="position:absolute;left:531.7px;top:545.2px" width="8" height="14" viewBox="0 0 8 14"><path d="M0.5 4.2 L4 0.3 L7.5 4.2 Z M0.5 9.2 L4 13.1 L7.5 9.2 Z" fill="#000"/></svg>
<div style="left:555.4px;top:542.0px;width:28.7px;height:20.6px;background:#cadfe9;"></div>
<div class="t" style="left:557.9px;top:545.95px;font-size:11.5px;line-height:11.5px;color:#0d0d0d;font-family:'Liberation Sans',sans-serif;transform:scaleX(0.9);transform-origin:0 0">255</div>
<div style="left:587.6px;top:542.0px;width:28.7px;height:20.6px;background:#cadfe9;"></div>
<div class="t" style="left:590.1px;top:545.95px;font-size:11.5px;line-height:11.5px;color:#0d0d0d;font-family:'Liberation Sans',sans-serif;transform:scaleX(0.9);transform-origin:0 0">255</div>
<div style="left:626.2px;top:542.0px;width:36.5px;height:20.6px;background:#cadfe9;"></div>
<div class="t" style="left:628.7px;top:545.95px;font-size:11.5px;line-height:11.5px;color:#0d0d0d;font-family:'Liberation Sans',sans-serif;transform:scaleX(0.9);transform-origin:0 0">0</div>
<div style="left:673px;top:542.0px;width:22px;height:20.6px;background:#cadfe9;"></div>
<div class="t" style="left:675.5px;top:545.95px;font-size:11.5px;line-height:11.5px;color:#0d0d0d;font-family:'Liberation Sans',sans-serif;transform:scaleX(0.9);transform-origin:0 0">0</div>
<div style="left:24px;top:566.1px;width:13px;height:13px;background:#000"></div>
<div class="t" style="left:44.5px;top:565.27px;font-size:11.5px;line-height:11.5px;color:#d8d8d8;font-family:'Liberation Sans',sans-serif;">2</div>
<div style="left:67px;top:566.1px;width:13px;height:13px;background:#000"><svg width="15" height="15" viewBox="0 -2 15 15" style="position:absolute;left:0;top:-2px;overflow:visible"><path d="M0.6 7.1 L2.4 5.5 L5.0 8.5 L11.7 -1.1 L13.2 -0.3 L6.0 11.5 L4.3 11.5 Z" fill="#f2f2f2"/></svg></div>
<div style="left:90.5px;top:566.1px;width:13px;height:13px;background:#000"><svg width="15" height="15" viewBox="0 -2 15 15" style="position:absolute;left:0;top:-2px;overflow:visible"><path d="M0.6 7.1 L2.4 5.5 L5.0 8.5 L11.7 -1.1 L13.2 -0.3 L6.0 11.5 L4.3 11.5 Z" fill="#f2f2f2"/></svg></div>
<div style="left:113.8px;top:566.1px;width:13px;height:13px;background:#000"><svg width="15" height="15" viewBox="0 -2 15 15" style="position:absolute;left:0;top:-2px;overflow:visible"><path d="M0.6 7.1 L2.4 5.5 L5.0 8.5 L11.7 -1.1 L13.2 -0.3 L6.0 11.5 L4.3 11.5 Z" fill="#f2f2f2"/></svg></div>
<div style="left:137px;top:566.1px;width:13px;height:13px;background:#000"></div>
<div style="left:160.3px;top:566.1px;width:13px;height:13px;background:#000"></div>
<div style="left:183px;top:566.1px;width:13px;height:13px;background:#000"></div>
<div style="left:228px;top:564.4px;width:64px;height:20.6px;background:#484848;border:1px solid #5b5b5b;box-sizing:border-box;"></div>
<div class="t" style="left:232.3px;top:568.35px;font-size:11.5px;line-height:11.5px;color:#9a9a9a;font-family:'Liberation Sans',sans-serif;transform:scaleX(0.9);transform-origin:0 0">Disable</div>
<svg style="position:absolute;left:278.5px;top:572.6999999999999px" width="8" height="5" viewBox="0 0 8 5"><path d="M0 0 L8 0 L4 4.3 Z" fill="#c0c0c0"/></svg>
<div style="left:301.3px;top:564.4px;width:74.4px;height:20.6px;background:#484848;border:1px solid #5b5b5b;box-sizing:border-box;"></div>
<div class="t" style="left:305.6px;top:568.35px;font-size:11.5px;line-height:11.5px;color:#9a9a9a;font-family:'Liberation Sans',sans-serif;transform:scaleX(0.9);transform-origin:0 0">V_MaRS</div>
<svg style="position:absolute;left:362.20000000000005px;top:572.6999999999999px" width="8" height="5" viewBox="0 0 8 5"><path d="M0 0 L8 0 L4 4.3 Z" fill="#c0c0c0"/></svg>
<div style="left:385.7px;top:564.4px;width:34.9px;height:20.6px;background:#cadfe9;"></div>
<div class="t" style="left:388.2px;top:568.35px;font-size:11.5px;line-height:11.5px;color:#0d0d0d;font-family:'Liberation Sans',sans-serif;transform:scaleX(0.9);transform-origin:0 0">6</div>
<svg style="position:absolute;left:406.59999999999997px;top:567.6px" width="8" height="14" viewBox="0 0 8 14"><path d="M0.5 4.2 L4 0.3 L7.5 4.2 Z M0.5 9.2 L4 13.1 L7.5 9.2 Z" fill="#000"/></svg>
<div style="left:424.7px;top:564.4px;width:32.3px;height:20.6px;background:#cadfe9;"></div>
<div class="t" style="left:427.2px;top:568.35px;font-size:11.5px;line-height:11.5px;color:#0d0d0d;font-family:'Liberation Sans',sans-serif;transform:scaleX(0.9);transform-origin:0 0">100</div>
<div style="left:464.5px;top:564.4px;width:32.8px;height:20.6px;background:#cadfe9;"></div>
<div class="t" style="left:467.0px;top:568.35px;font-size:11.5px;line-height:11.5px;color:#0d0d0d;font-family:'Liberation Sans',sans-serif;transform:scaleX(0.9);transform-origin:0 0">1</div>
<svg style="position:absolute;left:483.3px;top:567.6px" width="8" height="14" viewBox="0 0 8 14"><path d="M0.5 4.2 L4 0.3 L7.5 4.2 Z M0.5 9.2 L4 13.1 L7.5 9.2 Z" fill="#000"/></svg>
<div style="left:504.7px;top:564.4px;width:41px;height:20.6px;background:#cadfe9;"></div>
<div class="t" style="left:507.2px;top:568.35px;font-size:11.5px;line-height:11.5px;color:#0d0d0d;font-family:'Liberation Sans',sans-serif;transform:scaleX(0.9);transform-origin:0 0">10</div>
<svg style="position:absolute;left:531.7px;top:567.6px" width="8" height="14" viewBox="0 0 8 14"><path d="M0.5 4.2 L4 0.3 L7.5 4.2 Z M0.5 9.2 L4 13.1 L7.5 9.2 Z" fill="#000"/></svg>
<div style="left:555.4px;top:564.4px;width:28.7px;height:20.6px;background:#cadfe9;"></div>
<div class="t" style="left:557.9px;top:568.35px;font-size:11.5px;line-height:11.5px;color:#0d0d0d;font-family:'Liberation Sans',sans-serif;transform:scaleX(0.9);transform-origin:0 0">255</div>
<div style="left:587.6px;top:564.4px;width:28.7px;height:20.6px;background:#cadfe9;"></div>
<div class="t" style="left:590.1px;top:568.35px;font-size:11.5px;line-height:11.5px;color:#0d0d0d;font-family:'Liberation Sans',sans-serif;transform:scaleX(0.9);transform-origin:0 0">255</div>
<div style="left:626.2px;top:564.4px;width:36.5px;height:20.6px;background:#cadfe9;"></div>
<div class="t" style="left:628.7px;top:568.35px;font-size:11.5px;line-height:11.5px;color:#0d0d0d;font-family:'Liberation Sans',sans-serif;transform:scaleX(0.9);transform-origin:0 0">0</div>
<div style="left:673px;top:564.4px;width:22px;height:20.6px;background:#cadfe9;"></div>
<div class="t" style="left:675.5px;top:568.35px;font-size:11.5px;line-height:11.5px;color:#0d0d0d;font-family:'Liberation Sans',sans-serif;transform:scaleX(0.9);transform-origin:0 0">0</div>
<div style="left:24px;top:588.5px;width:13px;height:13px;background:#000"></div>
<div class="t" style="left:44.5px;top:587.67px;font-size:11.5px;line-height:11.5px;color:#d8d8d8;font-family:'Liberation Sans',sans-serif;">3</div>
<div style="left:67px;top:588.5px;width:13px;height:13px;background:#000"><svg width="15" height="15" viewBox="0 -2 15 15" style="position:absolute;left:0;top:-2px;overflow:visible"><path d="M0.6 7.1 L2.4 5.5 L5.0 8.5 L11.7 -1.1 L13.2 -0.3 L6.0 11.5 L4.3 11.5 Z" fill="#f2f2f2"/></svg></div>
<div style="left:90.5px;top:588.5px;width:13px;height:13px;background:#000"><svg width="15" height="15" viewBox="0 -2 15 15" style="position:absolute;left:0;top:-2px;overflow:visible"><path d="M0.6 7.1 L2.4 5.5 L5.0 8.5 L11.7 -1.1 L13.2 -0.3 L6.0 11.5 L4.3 11.5 Z" fill="#f2f2f2"/></svg></div>
<div style="left:113.8px;top:588.5px;width:13px;height:13px;background:#000"><svg width="15" height="15" viewBox="0 -2 15 15" style="position:absolute;left:0;top:-2px;overflow:visible"><path d="M0.6 7.1 L2.4 5.5 L5.0 8.5 L11.7 -1.1 L13.2 -0.3 L6.0 11.5 L4.3 11.5 Z" fill="#f2f2f2"/></svg></div>
<div style="left:137px;top:588.5px;width:13px;height:13px;background:#000"></div>
<div style="left:160.3px;top:588.5px;width:13px;height:13px;background:#000"></div>
<div style="left:183px;top:588.5px;width:13px;height:13px;background:#000"></div>
<div style="left:228px;top:586.8px;width:64px;height:20.6px;background:#484848;border:1px solid #5b5b5b;box-sizing:border-box;"></div>
<div class="t" style="left:232.3px;top:590.75px;font-size:11.5px;line-height:11.5px;color:#9a9a9a;font-family:'Liberation Sans',sans-serif;transform:scaleX(0.9);transform-origin:0 0">Disable</div>
<svg style="position:absolute;left:278.5px;top:595.0999999999999px" width="8" height="5" viewBox="0 0 8 5"><path d="M0 0 L8 0 L4 4.3 Z" fill="#c0c0c0"/></svg>
<div style="left:301.3px;top:586.8px;width:74.4px;height:20.6px;background:#484848;border:1px solid #5b5b5b;box-sizing:border-box;"></div>
<div class="t" style="left:305.6px;top:590.75px;font-size:11.5px;line-height:11.5px;color:#9a9a9a;font-family:'Liberation Sans',sans-serif;transform:scaleX(0.9);transform-origin:0 0">V_MaRS</div>
<svg style="position:absolute;left:362.20000000000005px;top:595.0999999999999px" width="8" height="5" viewBox="0 0 8 5"><path d="M0 0 L8 0 L4 4.3 Z" fill="#c0c0c0"/></svg>
<div style="left:385.7px;top:586.8px;width:34.9px;height:20.6px;background:#cadfe9;"></div>
<div class="t" style="left:388.2px;top:590.75px;font-size:11.5px;line-height:11.5px;color:#0d0d0d;font-family:'Liberation Sans',sans-serif;transform:scaleX(0.9);transform-origin:0 0">7</div>
<svg style="position:absolute;left:406.59999999999997px;top:590.0px" width="8" height="14" viewBox="0 0 8 14"><path d="M0.5 4.2 L4 0.3 L7.5 4.2 Z M0.5 9.2 L4 13.1 L7.5 9.2 Z" fill="#000"/></svg>
<div style="left:424.7px;top:586.8px;width:32.3px;height:20.6px;background:#cadfe9;"></div>
<div class="t" style="left:427.2px;top:590.75px;font-size:11.5px;line-height:11.5px;color:#0d0d0d;font-family:'Liberation Sans',sans-serif;transform:scaleX(0.9);transform-origin:0 0">200</div>
<div style="left:464.5px;top:586.8px;width:32.8px;height:20.6px;background:#cadfe9;"></div>
<div class="t" style="left:467.0px;top:590.75px;font-size:11.5px;line-height:11.5px;color:#0d0d0d;font-family:'Liberation Sans',sans-serif;transform:scaleX(0.9);transform-origin:0 0">2</div>
<svg style="position:absolute;left:483.3px;top:590.0px" width="8" height="14" viewBox="0 0 8 14"><path d="M0.5 4.2 L4 0.3 L7.5 4.2 Z M0.5 9.2 L4 13.1 L7.5 9.2 Z" fill="#000"/></svg>
<div style="left:504.7px;top:586.8px;width:41px;height:20.6px;background:#cadfe9;"></div>
<div class="t" style="left:507.2px;top:590.75px;font-size:11.5px;line-height:11.5px;color:#0d0d0d;font-family:'Liberation Sans',sans-serif;transform:scaleX(0.9);transform-origin:0 0">9</div>
<svg style="position:absolute;left:531.7px;top:590.0px" width="8" height="14" viewBox="0 0 8 14"><path d="M0.5 4.2 L4 0.3 L7.5 4.2 Z M0.5 9.2 L4 13.1 L7.5 9.2 Z" fill="#000"/></svg>
<div style="left:555.4px;top:586.8px;width:28.7px;height:20.6px;background:#cadfe9;"></div>
<div class="t" style="left:557.9px;top:590.75px;font-size:11.5px;line-height:11.5px;color:#0d0d0d;font-family:'Liberation Sans',sans-serif;transform:scaleX(0.9);transform-origin:0 0">255</div>
<div style="left:587.6px;top:586.8px;width:28.7px;height:20.6px;background:#cadfe9;"></div>
<div class="t" style="left:590.1px;top:590.75px;font-size:11.5px;line-height:11.5px;color:#0d0d0d;font-family:'Liberation Sans',sans-serif;transform:scaleX(0.9);transform-origin:0 0">255</div>
<div style="left:626.2px;top:586.8px;width:36.5px;height:20.6px;background:#cadfe9;"></div>
<div class="t" style="left:628.7px;top:590.75px;font-size:11.5px;line-height:11.5px;color:#0d0d0d;font-family:'Liberation Sans',sans-serif;transform:scaleX(0.9);transform-origin:0 0">0</div>
<div style="left:673px;top:586.8px;width:22px;height:20.6px;background:#cadfe9;"></div>
<div class="t" style="left:675.5px;top:590.75px;font-size:11.5px;line-height:11.5px;color:#0d0d0d;font-family:'Liberation Sans',sans-serif;transform:scaleX(0.9);transform-origin:0 0">0</div>
<div style="left:24px;top:610.9000000000001px;width:13px;height:13px;background:#000"></div>
<div class="t" style="left:44.5px;top:610.07px;font-size:11.5px;line-height:11.5px;color:#d8d8d8;font-family:'Liberation Sans',sans-serif;">4</div>
<div style="left:67px;top:610.9000000000001px;width:13px;height:13px;background:#000"><svg width="15" height="15" viewBox="0 -2 15 15" style="position:absolute;left:0;top:-2px;overflow:visible"><path d="M0.6 7.1 L2.4 5.5 L5.0 8.5 L11.7 -1.1 L13.2 -0.3 L6.0 11.5 L4.3 11.5 Z" fill="#f2f2f2"/></svg></div>
<div style="left:90.5px;top:610.9000000000001px;width:13px;height:13px;background:#000"><svg width="15" height="15" viewBox="0 -2 15 15" style="position:absolute;left:0;top:-2px;overflow:visible"><path d="M0.6 7.1 L2.4 5.5 L5.0 8.5 L11.7 -1.1 L13.2 -0.3 L6.0 11.5 L4.3 11.5 Z" fill="#f2f2f2"/></svg></div>
<div style="left:113.8px;top:610.9000000000001px;width:13px;height:13px;background:#000"></div>
<div style="left:137px;top:610.9000000000001px;width:13px;height:13px;background:#000"></div>
<div style="left:160.3px;top:610.9000000000001px;width:13px;height:13px;background:#000"></div>
<div style="left:183px;top:610.9000000000001px;width:13px;height:13px;background:#000"></div>
<div style="left:228px;top:609.2px;width:64px;height:20.6px;background:#484848;border:1px solid #5b5b5b;box-sizing:border-box;"></div>
<div class="t" style="left:232.3px;top:613.15px;font-size:11.5px;line-height:11.5px;color:#9a9a9a;font-family:'Liberation Sans',sans-serif;transform:scaleX(0.9);transform-origin:0 0">Disable</div>
<svg style="position:absolute;left:278.5px;top:617.5px" width="8" height="5" viewBox="0 0 8 5"><path d="M0 0 L8 0 L4 4.3 Z" fill="#c0c0c0"/></svg>
<div style="left:301.3px;top:609.2px;width:74.4px;height:20.6px;background:#484848;border:1px solid #5b5b5b;box-sizing:border-box;"></div>
<div class="t" style="left:305.6px;top:613.15px;font-size:11.5px;line-height:11.5px;color:#9a9a9a;font-family:'Liberation Sans',sans-serif;transform:scaleX(0.9);transform-origin:0 0">Virtual</div>
<svg style="position:absolute;left:362.20000000000005px;top:617.5px" width="8" height="5" viewBox="0 0 8 5"><path d="M0 0 L8 0 L4 4.3 Z" fill="#c0c0c0"/></svg>
<div style="left:385.7px;top:609.2px;width:34.9px;height:20.6px;background:#cadfe9;"></div>
<div class="t" style="left:388.2px;top:613.15px;font-size:11.5px;line-height:11.5px;color:#0d0d0d;font-family:'Liberation Sans',sans-serif;transform:scaleX(0.9);transform-origin:0 0">7</div>
<svg style="position:absolute;left:406.59999999999997px;top:612.4000000000001px" width="8" height="14" viewBox="0 0 8 14"><path d="M0.5 4.2 L4 0.3 L7.5 4.2 Z M0.5 9.2 L4 13.1 L7.5 9.2 Z" fill="#000"/></svg>
<div style="left:424.7px;top:609.2px;width:32.3px;height:20.6px;background:#cadfe9;"></div>
<div class="t" style="left:427.2px;top:613.15px;font-size:11.5px;line-height:11.5px;color:#0d0d0d;font-family:'Liberation Sans',sans-serif;transform:scaleX(0.9);transform-origin:0 0">200</div>
<div style="left:464.5px;top:609.2px;width:32.8px;height:20.6px;background:#cadfe9;"></div>
<div class="t" style="left:467.0px;top:613.15px;font-size:11.5px;line-height:11.5px;color:#0d0d0d;font-family:'Liberation Sans',sans-serif;transform:scaleX(0.9);transform-origin:0 0">2</div>
<svg style="position:absolute;left:483.3px;top:612.4000000000001px" width="8" height="14" viewBox="0 0 8 14"><path d="M0.5 4.2 L4 0.3 L7.5 4.2 Z M0.5 9.2 L4 13.1 L7.5 9.2 Z" fill="#000"/></svg>
<div style="left:504.7px;top:609.2px;width:41px;height:20.6px;background:#cadfe9;"></div>
<div class="t" style="left:507.2px;top:613.15px;font-size:11.5px;line-height:11.5px;color:#0d0d0d;font-family:'Liberation Sans',sans-serif;transform:scaleX(0.9);transform-origin:0 0">9</div>
<svg style="position:absolute;left:531.7px;top:612.4000000000001px" width="8" height="14" viewBox="0 0 8 14"><path d="M0.5 4.2 L4 0.3 L7.5 4.2 Z M0.5 9.2 L4 13.1 L7.5 9.2 Z" fill="#000"/></svg>
<div style="left:555.4px;top:609.2px;width:28.7px;height:20.6px;background:#cadfe9;"></div>
<div class="t" style="left:557.9px;top:613.15px;font-size:11.5px;line-height:11.5px;color:#0d0d0d;font-family:'Liberation Sans',sans-serif;transform:scaleX(0.9);transform-origin:0 0">255</div>
<div style="left:587.6px;top:609.2px;width:28.7px;height:20.6px;background:#cadfe9;"></div>
<div class="t" style="left:590.1px;top:613.15px;font-size:11.5px;line-height:11.5px;color:#0d0d0d;font-family:'Liberation Sans',sans-serif;transform:scaleX(0.9);transform-origin:0 0">255</div>
<div style="left:626.2px;top:609.2px;width:36.5px;height:20.6px;background:#cadfe9;"></div>
<div class="t" style="left:628.7px;top:613.15px;font-size:11.5px;line-height:11.5px;color:#0d0d0d;font-family:'Liberation Sans',sans-serif;transform:scaleX(0.9);transform-origin:0 0">0</div>
<div style="left:673px;top:609.2px;width:22px;height:20.6px;background:#cadfe9;"></div>
<div class="t" style="left:675.5px;top:613.15px;font-size:11.5px;line-height:11.5px;color:#0d0d0d;font-family:'Liberation Sans',sans-serif;transform:scaleX(0.9);transform-origin:0 0">0</div>
<div style="left:24px;top:633.3000000000001px;width:13px;height:13px;background:#000"></div>
<div class="t" style="left:44.5px;top:632.47px;font-size:11.5px;line-height:11.5px;color:#d8d8d8;font-family:'Liberation Sans',sans-serif;">5</div>
<div style="left:67px;top:633.3000000000001px;width:13px;height:13px;background:#000"><svg width="15" height="15" viewBox="0 -2 15 15" style="position:absolute;left:0;top:-2px;overflow:visible"><path d="M0.6 7.1 L2.4 5.5 L5.0 8.5 L11.7 -1.1 L13.2 -0.3 L6.0 11.5 L4.3 11.5 Z" fill="#f2f2f2"/></svg></div>
<div style="left:90.5px;top:633.3000000000001px;width:13px;height:13px;background:#000"><svg width="15" height="15" viewBox="0 -2 15 15" style="position:absolute;left:0;top:-2px;overflow:visible"><path d="M0.6 7.1 L2.4 5.5 L5.0 8.5 L11.7 -1.1 L13.2 -0.3 L6.0 11.5 L4.3 11.5 Z" fill="#f2f2f2"/></svg></div>
<div style="left:113.8px;top:633.3000000000001px;width:13px;height:13px;background:#000"></div>
<div style="left:137px;top:633.3000000000001px;width:13px;height:13px;background:#000"></div>
<div style="left:160.3px;top:633.3000000000001px;width:13px;height:13px;background:#000"></div>
<div style="left:183px;top:633.3000000000001px;width:13px;height:13px;background:#000"></div>
<div style="left:228px;top:631.6px;width:64px;height:20.6px;background:#484848;border:1px solid #5b5b5b;box-sizing:border-box;"></div>
<div class="t" style="left:232.3px;top:635.55px;font-size:11.5px;line-height:11.5px;color:#9a9a9a;font-family:'Liberation Sans',sans-serif;transform:scaleX(0.9);transform-origin:0 0">Disable</div>
<svg style="position:absolute;left:278.5px;top:639.9px" width="8" height="5" viewBox="0 0 8 5"><path d="M0 0 L8 0 L4 4.3 Z" fill="#c0c0c0"/></svg>
<div style="left:301.3px;top:631.6px;width:74.4px;height:20.6px;background:#484848;border:1px solid #5b5b5b;box-sizing:border-box;"></div>
<div class="t" style="left:305.6px;top:635.55px;font-size:11.5px;line-height:11.5px;color:#9a9a9a;font-family:'Liberation Sans',sans-serif;transform:scaleX(0.9);transform-origin:0 0">Virtual</div>
<svg style="position:absolute;left:362.20000000000005px;top:639.9px" width="8" height="5" viewBox="0 0 8 5"><path d="M0 0 L8 0 L4 4.3 Z" fill="#c0c0c0"/></svg>
<div style="left:385.7px;top:631.6px;width:34.9px;height:20.6px;background:#cadfe9;"></div>
<div class="t" style="left:388.2px;top:635.55px;font-size:11.5px;line-height:11.5px;color:#0d0d0d;font-family:'Liberation Sans',sans-serif;transform:scaleX(0.9);transform-origin:0 0">7</div>
<svg style="position:absolute;left:406.59999999999997px;top:634.8000000000001px" width="8" height="14" viewBox="0 0 8 14"><path d="M0.5 4.2 L4 0.3 L7.5 4.2 Z M0.5 9.2 L4 13.1 L7.5 9.2 Z" fill="#000"/></svg>
<div style="left:424.7px;top:631.6px;width:32.3px;height:20.6px;background:#cadfe9;"></div>
<div class="t" style="left:427.2px;top:635.55px;font-size:11.5px;line-height:11.5px;color:#0d0d0d;font-family:'Liberation Sans',sans-serif;transform:scaleX(0.9);transform-origin:0 0">200</div>
<div style="left:464.5px;top:631.6px;width:32.8px;height:20.6px;background:#cadfe9;"></div>
<div class="t" style="left:467.0px;top:635.55px;font-size:11.5px;line-height:11.5px;color:#0d0d0d;font-family:'Liberation Sans',sans-serif;transform:scaleX(0.9);transform-origin:0 0">2</div>
<svg style="position:absolute;left:483.3px;top:634.8000000000001px" width="8" height="14" viewBox="0 0 8 14"><path d="M0.5 4.2 L4 0.3 L7.5 4.2 Z M0.5 9.2 L4 13.1 L7.5 9.2 Z" fill="#000"/></svg>
<div style="left:504.7px;top:631.6px;width:41px;height:20.6px;background:#cadfe9;"></div>
<div class="t" style="left:507.2px;top:635.55px;font-size:11.5px;line-height:11.5px;color:#0d0d0d;font-family:'Liberation Sans',sans-serif;transform:scaleX(0.9);transform-origin:0 0">8</div>
<svg style="position:absolute;left:531.7px;top:634.8000000000001px" width="8" height="14" viewBox="0 0 8 14"><path d="M0.5 4.2 L4 0.3 L7.5 4.2 Z M0.5 9.2 L4 13.1 L7.5 9.2 Z" fill="#000"/></svg>
<div style="left:555.4px;top:631.6px;width:28.7px;height:20.6px;background:#cadfe9;"></div>
<div class="t" style="left:557.9px;top:635.55px;font-size:11.5px;line-height:11.5px;color:#0d0d0d;font-family:'Liberation Sans',sans-serif;transform:scaleX(0.9);transform-origin:0 0">255</div>
<div style="left:587.6px;top:631.6px;width:28.7px;height:20.6px;background:#cadfe9;"></div>
<div class="t" style="left:590.1px;top:635.55px;font-size:11.5px;line-height:11.5px;color:#0d0d0d;font-family:'Liberation Sans',sans-serif;transform:scaleX(0.9);transform-origin:0 0">255</div>
<div style="left:626.2px;top:631.6px;width:36.5px;height:20.6px;background:#cadfe9;"></div>
<div class="t" style="left:628.7px;top:635.55px;font-size:11.5px;line-height:11.5px;color:#0d0d0d;font-family:'Liberation Sans',sans-serif;transform:scaleX(0.9);transform-origin:0 0">0</div>
<div style="left:673px;top:631.6px;width:22px;height:20.6px;background:#cadfe9;"></div>
<div class="t" style="left:675.5px;top:635.55px;font-size:11.5px;line-height:11.5px;color:#0d0d0d;font-family:'Liberation Sans',sans-serif;transform:scaleX(0.9);transform-origin:0 0">0</div>
<div style="left:24px;top:655.7px;width:13px;height:13px;background:#000"></div>
<div class="t" style="left:44.5px;top:654.87px;font-size:11.5px;line-height:11.5px;color:#d8d8d8;font-family:'Liberation Sans',sans-serif;">6</div>
<div style="left:67px;top:655.7px;width:13px;height:13px;background:#000"><svg width="15" height="15" viewBox="0 -2 15 15" style="position:absolute;left:0;top:-2px;overflow:visible"><path d="M0.6 7.1 L2.4 5.5 L5.0 8.5 L11.7 -1.1 L13.2 -0.3 L6.0 11.5 L4.3 11.5 Z" fill="#f2f2f2"/></svg></div>
<div style="left:90.5px;top:655.7px;width:13px;height:13px;background:#000"><svg width="15" height="15" viewBox="0 -2 15 15" style="position:absolute;left:0;top:-2px;overflow:visible"><path d="M0.6 7.1 L2.4 5.5 L5.0 8.5 L11.7 -1.1 L13.2 -0.3 L6.0 11.5 L4.3 11.5 Z" fill="#f2f2f2"/></svg></div>
<div style="left:113.8px;top:655.7px;width:13px;height:13px;background:#000"></div>
<div style="left:137px;top:655.7px;width:13px;height:13px;background:#000"></div>
<div style="left:160.3px;top:655.7px;width:13px;height:13px;background:#000"></div>
<div style="left:183px;top:655.7px;width:13px;height:13px;background:#000"></div>
<div style="left:228px;top:654.0px;width:64px;height:20.6px;background:#484848;border:1px solid #5b5b5b;box-sizing:border-box;"></div>
<div class="t" style="left:232.3px;top:657.95px;font-size:11.5px;line-height:11.5px;color:#9a9a9a;font-family:'Liberation Sans',sans-serif;transform:scaleX(0.9);transform-origin:0 0">Disable</div>
<svg style="position:absolute;left:278.5px;top:662.3px" width="8" height="5" viewBox="0 0 8 5"><path d="M0 0 L8 0 L4 4.3 Z" fill="#c0c0c0"/></svg>
<div style="left:301.3px;top:654.0px;width:74.4px;height:20.6px;background:#484848;border:1px solid #5b5b5b;box-sizing:border-box;"></div>
<div class="t" style="left:305.6px;top:657.95px;font-size:11.5px;line-height:11.5px;color:#9a9a9a;font-family:'Liberation Sans',sans-serif;transform:scaleX(0.9);transform-origin:0 0">D_MaRS</div>
<svg style="position:absolute;left:362.20000000000005px;top:662.3px" width="8" height="5" viewBox="0 0 8 5"><path d="M0 0 L8 0 L4 4.3 Z" fill="#c0c0c0"/></svg>
<div style="left:385.7px;top:654.0px;width:34.9px;height:20.6px;background:#cadfe9;"></div>
<div class="t" style="left:388.2px;top:657.95px;font-size:11.5px;line-height:11.5px;color:#0d0d0d;font-family:'Liberation Sans',sans-serif;transform:scaleX(0.9);transform-origin:0 0">6</div>
<svg style="position:absolute;left:406.59999999999997px;top:657.2px" width="8" height="14" viewBox="0 0 8 14"><path d="M0.5 4.2 L4 0.3 L7.5 4.2 Z M0.5 9.2 L4 13.1 L7.5 9.2 Z" fill="#000"/></svg>
<div style="left:424.7px;top:654.0px;width:32.3px;height:20.6px;background:#cadfe9;"></div>
<div class="t" style="left:427.2px;top:657.95px;font-size:11.5px;line-height:11.5px;color:#0d0d0d;font-family:'Liberation Sans',sans-serif;transform:scaleX(0.9);transform-origin:0 0">200</div>
<div style="left:464.5px;top:654.0px;width:32.8px;height:20.6px;background:#cadfe9;"></div>
<div class="t" style="left:467.0px;top:657.95px;font-size:11.5px;line-height:11.5px;color:#0d0d0d;font-family:'Liberation Sans',sans-serif;transform:scaleX(0.9);transform-origin:0 0">2</div>
<svg style="position:absolute;left:483.3px;top:657.2px" width="8" height="14" viewBox="0 0 8 14"><path d="M0.5 4.2 L4 0.3 L7.5 4.2 Z M0.5 9.2 L4 13.1 L7.5 9.2 Z" fill="#000"/></svg>
<div style="left:504.7px;top:654.0px;width:41px;height:20.6px;background:#cadfe9;"></div>
<div class="t" style="left:507.2px;top:657.95px;font-size:11.5px;line-height:11.5px;color:#0d0d0d;font-family:'Liberation Sans',sans-serif;transform:scaleX(0.9);transform-origin:0 0">9</div>
<svg style="position:absolute;left:531.7px;top:657.2px" width="8" height="14" viewBox="0 0 8 14"><path d="M0.5 4.2 L4 0.3 L7.5 4.2 Z M0.5 9.2 L4 13.1 L7.5 9.2 Z" fill="#000"/></svg>
<div style="left:555.4px;top:654.0px;width:28.7px;height:20.6px;background:#cadfe9;"></div>
<div class="t" style="left:557.9px;top:657.95px;font-size:11.5px;line-height:11.5px;color:#0d0d0d;font-family:'Liberation Sans',sans-serif;transform:scaleX(0.9);transform-origin:0 0">255</div>
<div style="left:587.6px;top:654.0px;width:28.7px;height:20.6px;background:#cadfe9;"></div>
<div class="t" style="left:590.1px;top:657.95px;font-size:11.5px;line-height:11.5px;color:#0d0d0d;font-family:'Liberation Sans',sans-serif;transform:scaleX(0.9);transform-origin:0 0">255</div>
<div style="left:626.2px;top:654.0px;width:36.5px;height:20.6px;background:#cadfe9;"></div>
<div class="t" style="left:628.7px;top:657.95px;font-size:11.5px;line-height:11.5px;color:#0d0d0d;font-family:'Liberation Sans',sans-serif;transform:scaleX(0.9);transform-origin:0 0">0</div>
<div style="left:673px;top:654.0px;width:22px;height:20.6px;background:#cadfe9;"></div>
<div class="t" style="left:675.5px;top:657.95px;font-size:11.5px;line-height:11.5px;color:#0d0d0d;font-family:'Liberation Sans',sans-serif;transform:scaleX(0.9);transform-origin:0 0">0</div>
<div style="left:24px;top:678.1px;width:13px;height:13px;background:#000"></div>
<div class="t" style="left:44.5px;top:677.27px;font-size:11.5px;line-height:11.5px;color:#d8d8d8;font-family:'Liberation Sans',sans-serif;">7</div>
<div style="left:67px;top:678.1px;width:13px;height:13px;background:#000"><svg width="15" height="15" viewBox="0 -2 15 15" style="position:absolute;left:0;top:-2px;overflow:visible"><path d="M0.6 7.1 L2.4 5.5 L5.0 8.5 L11.7 -1.1 L13.2 -0.3 L6.0 11.5 L4.3 11.5 Z" fill="#f2f2f2"/></svg></div>
<div style="left:90.5px;top:678.1px;width:13px;height:13px;background:#000"><svg width="15" height="15" viewBox="0 -2 15 15" style="position:absolute;left:0;top:-2px;overflow:visible"><path d="M0.6 7.1 L2.4 5.5 L5.0 8.5 L11.7 -1.1 L13.2 -0.3 L6.0 11.5 L4.3 11.5 Z" fill="#f2f2f2"/></svg></div>
<div style="left:113.8px;top:678.1px;width:13px;height:13px;background:#000"></div>
<div style="left:137px;top:678.1px;width:13px;height:13px;background:#000"></div>
<div style="left:160.3px;top:678.1px;width:13px;height:13px;background:#000"></div>
<div style="left:183px;top:678.1px;width:13px;height:13px;background:#000"></div>
<div style="left:228px;top:676.4px;width:64px;height:20.6px;background:#484848;border:1px solid #5b5b5b;box-sizing:border-box;"></div>
<div class="t" style="left:232.3px;top:680.35px;font-size:11.5px;line-height:11.5px;color:#9a9a9a;font-family:'Liberation Sans',sans-serif;transform:scaleX(0.9);transform-origin:0 0">Disable</div>
<svg style="position:absolute;left:278.5px;top:684.6999999999999px" width="8" height="5" viewBox="0 0 8 5"><path d="M0 0 L8 0 L4 4.3 Z" fill="#c0c0c0"/></svg>
<div style="left:301.3px;top:676.4px;width:74.4px;height:20.6px;background:#484848;border:1px solid #5b5b5b;box-sizing:border-box;"></div>
<div class="t" style="left:305.6px;top:680.35px;font-size:11.5px;line-height:11.5px;color:#9a9a9a;font-family:'Liberation Sans',sans-serif;transform:scaleX(0.9);transform-origin:0 0">D_MaRS</div>
<svg style="position:absolute;left:362.20000000000005px;top:684.6999999999999px" width="8" height="5" viewBox="0 0 8 5"><path d="M0 0 L8 0 L4 4.3 Z" fill="#c0c0c0"/></svg>
<div style="left:385.7px;top:676.4px;width:34.9px;height:20.6px;background:#cadfe9;"></div>
<div class="t" style="left:388.2px;top:680.35px;font-size:11.5px;line-height:11.5px;color:#0d0d0d;font-family:'Liberation Sans',sans-serif;transform:scaleX(0.9);transform-origin:0 0">6</div>
<svg style="position:absolute;left:406.59999999999997px;top:679.6px" width="8" height="14" viewBox="0 0 8 14"><path d="M0.5 4.2 L4 0.3 L7.5 4.2 Z M0.5 9.2 L4 13.1 L7.5 9.2 Z" fill="#000"/></svg>
<div style="left:424.7px;top:676.4px;width:32.3px;height:20.6px;background:#cadfe9;"></div>
<div class="t" style="left:427.2px;top:680.35px;font-size:11.5px;line-height:11.5px;color:#0d0d0d;font-family:'Liberation Sans',sans-serif;transform:scaleX(0.9);transform-origin:0 0">200</div>
<div style="left:464.5px;top:676.4px;width:32.8px;height:20.6px;background:#cadfe9;"></div>
<div class="t" style="left:467.0px;top:680.35px;font-size:11.5px;line-height:11.5px;color:#0d0d0d;font-family:'Liberation Sans',sans-serif;transform:scaleX(0.9);transform-origin:0 0">2</div>
<svg style="position:absolute;left:483.3px;top:679.6px" width="8" height="14" viewBox="0 0 8 14"><path d="M0.5 4.2 L4 0.3 L7.5 4.2 Z M0.5 9.2 L4 13.1 L7.5 9.2 Z" fill="#000"/></svg>
<div style="left:504.7px;top:676.4px;width:41px;height:20.6px;background:#cadfe9;"></div>
<div class="t" style="left:507.2px;top:680.35px;font-size:11.5px;line-height:11.5px;color:#0d0d0d;font-family:'Liberation Sans',sans-serif;transform:scaleX(0.9);transform-origin:0 0">9</div>
<svg style="position:absolute;left:531.7px;top:679.6px" width="8" height="14" viewBox="0 0 8 14"><path d="M0.5 4.2 L4 0.3 L7.5 4.2 Z M0.5 9.2 L4 13.1 L7.5 9.2 Z" fill="#000"/></svg>
<div style="left:555.4px;top:676.4px;width:28.7px;height:20.6px;background:#cadfe9;"></div>
<div class="t" style="left:557.9px;top:680.35px;font-size:11.5px;line-height:11.5px;color:#0d0d0d;font-family:'Liberation Sans',sans-serif;transform:scaleX(0.9);transform-origin:0 0">255</div>
<div style="left:587.6px;top:676.4px;width:28.7px;height:20.6px;background:#cadfe9;"></div>
<div class="t" style="left:590.1px;top:680.35px;font-size:11.5px;line-height:11.5px;color:#0d0d0d;font-family:'Liberation Sans',sans-serif;transform:scaleX(0.9);transform-origin:0 0">255</div>
<div style="left:626.2px;top:676.4px;width:36.5px;height:20.6px;background:#cadfe9;"></div>
<div class="t" style="left:628.7px;top:680.35px;font-size:11.5px;line-height:11.5px;color:#0d0d0d;font-family:'Liberation Sans',sans-serif;transform:scaleX(0.9);transform-origin:0 0">0</div>
<div style="left:673px;top:676.4px;width:22px;height:20.6px;background:#cadfe9;"></div>
<div class="t" style="left:675.5px;top:680.35px;font-size:11.5px;line-height:11.5px;color:#0d0d0d;font-family:'Liberation Sans',sans-serif;transform:scaleX(0.9);transform-origin:0 0">0</div>
<div style="left:24px;top:700.5px;width:13px;height:13px;background:#000"></div>
<div class="t" style="left:44.5px;top:699.67px;font-size:11.5px;line-height:11.5px;color:#d8d8d8;font-family:'Liberation Sans',sans-serif;">8</div>
<div style="left:67px;top:700.5px;width:13px;height:13px;background:#000"><svg width="15" height="15" viewBox="0 -2 15 15" style="position:absolute;left:0;top:-2px;overflow:visible"><path d="M0.6 7.1 L2.4 5.5 L5.0 8.5 L11.7 -1.1 L13.2 -0.3 L6.0 11.5 L4.3 11.5 Z" fill="#f2f2f2"/></svg></div>
<div style="left:90.5px;top:700.5px;width:13px;height:13px;background:#000"><svg width="15" height="15" viewBox="0 -2 15 15" style="position:absolute;left:0;top:-2px;overflow:visible"><path d="M0.6 7.1 L2.4 5.5 L5.0 8.5 L11.7 -1.1 L13.2 -0.3 L6.0 11.5 L4.3 11.5 Z" fill="#f2f2f2"/></svg></div>
<div style="left:113.8px;top:700.5px;width:13px;height:13px;background:#000"></div>
<div style="left:137px;top:700.5px;width:13px;height:13px;background:#000"></div>
<div style="left:160.3px;top:700.5px;width:13px;height:13px;background:#000"></div>
<div style="left:183px;top:700.5px;width:13px;height:13px;background:#000"></div>
<div style="left:228px;top:698.8px;width:64px;height:20.6px;background:#484848;border:1px solid #5b5b5b;box-sizing:border-box;"></div>
<div class="t" style="left:232.3px;top:702.75px;font-size:11.5px;line-height:11.5px;color:#9a9a9a;font-family:'Liberation Sans',sans-serif;transform:scaleX(0.9);transform-origin:0 0">Disable</div>
<svg style="position:absolute;left:278.5px;top:707.0999999999999px" width="8" height="5" viewBox="0 0 8 5"><path d="M0 0 L8 0 L4 4.3 Z" fill="#c0c0c0"/></svg>
<div style="left:301.3px;top:698.8px;width:74.4px;height:20.6px;background:#484848;border:1px solid #5b5b5b;box-sizing:border-box;"></div>
<div class="t" style="left:305.6px;top:702.75px;font-size:11.5px;line-height:11.5px;color:#9a9a9a;font-family:'Liberation Sans',sans-serif;transform:scaleX(0.9);transform-origin:0 0">D_MaRS</div>
<svg style="position:absolute;left:362.20000000000005px;top:707.0999999999999px" width="8" height="5" viewBox="0 0 8 5"><path d="M0 0 L8 0 L4 4.3 Z" fill="#c0c0c0"/></svg>
<div style="left:385.7px;top:698.8px;width:34.9px;height:20.6px;background:#cadfe9;"></div>
<div class="t" style="left:388.2px;top:702.75px;font-size:11.5px;line-height:11.5px;color:#0d0d0d;font-family:'Liberation Sans',sans-serif;transform:scaleX(0.9);transform-origin:0 0">6</div>
<svg style="position:absolute;left:406.59999999999997px;top:702.0px" width="8" height="14" viewBox="0 0 8 14"><path d="M0.5 4.2 L4 0.3 L7.5 4.2 Z M0.5 9.2 L4 13.1 L7.5 9.2 Z" fill="#000"/></svg>
<div style="left:424.7px;top:698.8px;width:32.3px;height:20.6px;background:#cadfe9;"></div>
<div class="t" style="left:427.2px;top:702.75px;font-size:11.5px;line-height:11.5px;color:#0d0d0d;font-family:'Liberation Sans',sans-serif;transform:scaleX(0.9);transform-origin:0 0">200</div>
<div style="left:464.5px;top:698.8px;width:32.8px;height:20.6px;background:#cadfe9;"></div>
<div class="t" style="left:467.0px;top:702.75px;font-size:11.5px;line-height:11.5px;color:#0d0d0d;font-family:'Liberation Sans',sans-serif;transform:scaleX(0.9);transform-origin:0 0">2</div>
<svg style="position:absolute;left:483.3px;top:702.0px" width="8" height="14" viewBox="0 0 8 14"><path d="M0.5 4.2 L4 0.3 L7.5 4.2 Z M0.5 9.2 L4 13.1 L7.5 9.2 Z" fill="#000"/></svg>
<div style="left:504.7px;top:698.8px;width:41px;height:20.6px;background:#cadfe9;"></div>
<div class="t" style="left:507.2px;top:702.75px;font-size:11.5px;line-height:11.5px;color:#0d0d0d;font-family:'Liberation Sans',sans-serif;transform:scaleX(0.9);transform-origin:0 0">9</div>
<svg style="position:absolute;left:531.7px;top:702.0px" width="8" height="14" viewBox="0 0 8 14"><path d="M0.5 4.2 L4 0.3 L7.5 4.2 Z M0.5 9.2 L4 13.1 L7.5 9.2 Z" fill="#000"/></svg>
<div style="left:555.4px;top:698.8px;width:28.7px;height:20.6px;background:#cadfe9;"></div>
<div class="t" style="left:557.9px;top:702.75px;font-size:11.5px;line-height:11.5px;color:#0d0d0d;font-family:'Liberation Sans',sans-serif;transform:scaleX(0.9);transform-origin:0 0">255</div>
<div style="left:587.6px;top:698.8px;width:28.7px;height:20.6px;background:#cadfe9;"></div>
<div class="t" style="left:590.1px;top:702.75px;font-size:11.5px;line-height:11.5px;color:#0d0d0d;font-family:'Liberation Sans',sans-serif;transform:scaleX(0.9);transform-origin:0 0">255</div>
<div style="left:626.2px;top:698.8px;width:36.5px;height:20.6px;background:#cadfe9;"></div>
<div class="t" style="left:628.7px;top:702.75px;font-size:11.5px;line-height:11.5px;color:#0d0d0d;font-family:'Liberation Sans',sans-serif;transform:scaleX(0.9);transform-origin:0 0">0</div>
<div style="left:673px;top:698.8px;width:22px;height:20.6px;background:#cadfe9;"></div>
<div class="t" style="left:675.5px;top:702.75px;font-size:11.5px;line-height:11.5px;color:#0d0d0d;font-family:'Liberation Sans',sans-serif;transform:scaleX(0.9);transform-origin:0 0">0</div>
<div style="left:763.6px;top:533.8px;width:88.4px;height:183.6px;border:1px solid #424242;box-sizing:border-box"></div>
<div class="t" style="left:801.5px;top:555.31px;font-size:10.5px;line-height:10.5px;color:#e0e0e0;font-family:'Liberation Sans',sans-serif;">MF</div>
<div style="left:784.4px;top:566.3px;width:49px;height:23.5px;background:#c9dce6"></div>
<div class="t" style="left:788px;top:571.00px;font-size:13px;line-height:13px;color:#1a1a1a;font-family:'Liberation Sans',sans-serif;">0</div>
<div class="t" style="left:776.4px;top:600.91px;font-size:10.5px;line-height:10.5px;color:#e0e0e0;font-family:'Liberation Sans',sans-serif;transform:scaleX(0.95);transform-origin:0 0">Trimmer mode</div>
<div style="left:773.2px;top:616.2px;width:67.7px;height:20.8px;background:#484848;border:1px solid #5b5b5b;box-sizing:border-box;"></div>
<div class="t" style="left:777.5px;top:620.28px;font-size:11.5px;line-height:11.5px;color:#9a9a9a;font-family:'Liberation Sans',sans-serif;transform:scaleX(0.9);transform-origin:0 0">Standard</div>
<svg style="position:absolute;left:827.4000000000001px;top:624.6px" width="8" height="5" viewBox="0 0 8 5"><path d="M0 0 L8 0 L4 4.3 Z" fill="#c0c0c0"/></svg>
<div style="left:58.6px;top:650.5px;width:497.6px;height:27.2px;border:3px solid #5fe024;border-radius:11px;box-sizing:border-box"></div>
<div style="left:58.6px;top:697.4px;width:494.6px;height:24px;border:3px solid #5fe024;border-radius:11px;box-sizing:border-box"></div>
<div style="left:5px;top:740px;width:965px;height:6px;background:#242424"></div>
</body></html>
